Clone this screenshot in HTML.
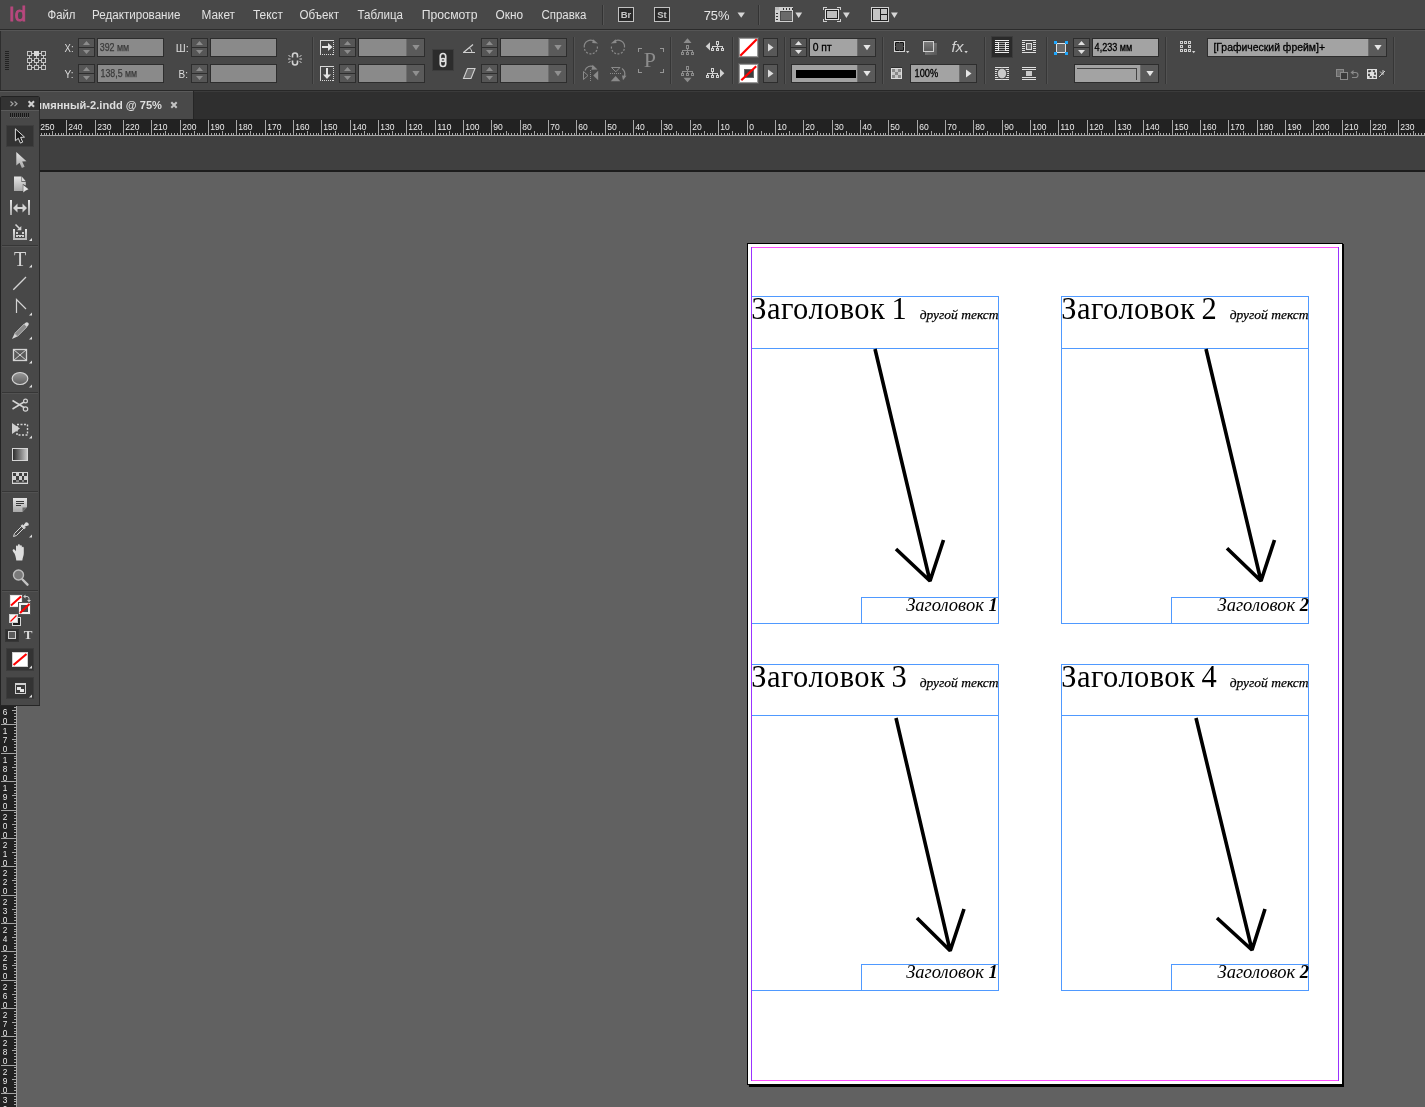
<!DOCTYPE html>
<html lang="ru"><head><meta charset="utf-8"><title>InDesign</title>
<style>
html,body{margin:0;padding:0;background:#616161;overflow:hidden}
body{width:1425px;height:1107px;position:relative}
svg{position:absolute;left:0;top:0;display:block;will-change:transform}
.ui{font-family:"Liberation Sans","DejaVu Sans",sans-serif}
.uib{font-family:"Liberation Sans","DejaVu Sans",sans-serif;font-weight:bold}
.se{font-family:"Liberation Serif","DejaVu Serif",serif}
.sei{font-family:"Liberation Serif","DejaVu Serif",serif;font-style:italic}
.seb{font-family:"Liberation Serif","DejaVu Serif",serif;font-style:italic;font-weight:bold}
.cr{shape-rendering:crispEdges}
</style></head><body>
<svg width="1425" height="1107" viewBox="0 0 1425 1107">
<g class="cr">
<rect x="0" y="0" width="1425" height="1107" fill="#616161" />
<rect x="0" y="0" width="1425" height="30" fill="#484848" />
<rect x="0" y="30" width="1425" height="61" fill="#474747" />
<rect x="0" y="29" width="1425" height="1" fill="#2b2b2b" />
<rect x="0" y="30" width="1425" height="1" fill="#555" />
<rect x="0" y="31" width="1" height="59" fill="#2e2e2e" />
<rect x="0" y="91" width="1425" height="28" fill="#2f2f2f" />
<rect x="0" y="91" width="1425" height="1" fill="#3b3b3b" />
<rect x="0" y="91" width="193" height="28" fill="#494949" />
<rect x="0" y="91" width="193" height="1" fill="#5a5a5a" />
<rect x="193" y="91" width="1" height="28" fill="#262626" />
<rect x="0" y="90" width="1425" height="1" fill="#282828" />
<rect x="0" y="119" width="1425" height="17" fill="#222222" />
<rect x="0" y="136" width="1425" height="34" fill="#404040" />
<rect x="0" y="170" width="1425" height="2" fill="#1c1c1c" />
</g>
<g class="cr">
<rect x="39" y="135" width="1386" height="1" fill="#a8a8a8" />
<rect x="41" y="133" width="1" height="3" fill="#a8a8a8" />
<rect x="44" y="133" width="1" height="3" fill="#a8a8a8" />
<rect x="46" y="133" width="1" height="3" fill="#a8a8a8" />
<rect x="49" y="133" width="1" height="3" fill="#a8a8a8" />
<rect x="52" y="131" width="1" height="5" fill="#a8a8a8" />
<rect x="55" y="133" width="1" height="3" fill="#a8a8a8" />
<rect x="58" y="133" width="1" height="3" fill="#a8a8a8" />
<rect x="61" y="133" width="1" height="3" fill="#a8a8a8" />
<rect x="63" y="133" width="1" height="3" fill="#a8a8a8" />
<rect x="66" y="120" width="1" height="16" fill="#a8a8a8" />
<rect x="69" y="133" width="1" height="3" fill="#a8a8a8" />
<rect x="72" y="133" width="1" height="3" fill="#a8a8a8" />
<rect x="75" y="133" width="1" height="3" fill="#a8a8a8" />
<rect x="78" y="133" width="1" height="3" fill="#a8a8a8" />
<rect x="80" y="131" width="1" height="5" fill="#a8a8a8" />
<rect x="83" y="133" width="1" height="3" fill="#a8a8a8" />
<rect x="86" y="133" width="1" height="3" fill="#a8a8a8" />
<rect x="89" y="133" width="1" height="3" fill="#a8a8a8" />
<rect x="92" y="133" width="1" height="3" fill="#a8a8a8" />
<rect x="95" y="120" width="1" height="16" fill="#a8a8a8" />
<rect x="97" y="133" width="1" height="3" fill="#a8a8a8" />
<rect x="100" y="133" width="1" height="3" fill="#a8a8a8" />
<rect x="103" y="133" width="1" height="3" fill="#a8a8a8" />
<rect x="106" y="133" width="1" height="3" fill="#a8a8a8" />
<rect x="109" y="131" width="1" height="5" fill="#a8a8a8" />
<rect x="112" y="133" width="1" height="3" fill="#a8a8a8" />
<rect x="114" y="133" width="1" height="3" fill="#a8a8a8" />
<rect x="117" y="133" width="1" height="3" fill="#a8a8a8" />
<rect x="120" y="133" width="1" height="3" fill="#a8a8a8" />
<rect x="123" y="120" width="1" height="16" fill="#a8a8a8" />
<rect x="126" y="133" width="1" height="3" fill="#a8a8a8" />
<rect x="129" y="133" width="1" height="3" fill="#a8a8a8" />
<rect x="131" y="133" width="1" height="3" fill="#a8a8a8" />
<rect x="134" y="133" width="1" height="3" fill="#a8a8a8" />
<rect x="137" y="131" width="1" height="5" fill="#a8a8a8" />
<rect x="140" y="133" width="1" height="3" fill="#a8a8a8" />
<rect x="143" y="133" width="1" height="3" fill="#a8a8a8" />
<rect x="146" y="133" width="1" height="3" fill="#a8a8a8" />
<rect x="148" y="133" width="1" height="3" fill="#a8a8a8" />
<rect x="151" y="120" width="1" height="16" fill="#a8a8a8" />
<rect x="154" y="133" width="1" height="3" fill="#a8a8a8" />
<rect x="157" y="133" width="1" height="3" fill="#a8a8a8" />
<rect x="160" y="133" width="1" height="3" fill="#a8a8a8" />
<rect x="163" y="133" width="1" height="3" fill="#a8a8a8" />
<rect x="165" y="131" width="1" height="5" fill="#a8a8a8" />
<rect x="168" y="133" width="1" height="3" fill="#a8a8a8" />
<rect x="171" y="133" width="1" height="3" fill="#a8a8a8" />
<rect x="174" y="133" width="1" height="3" fill="#a8a8a8" />
<rect x="177" y="133" width="1" height="3" fill="#a8a8a8" />
<rect x="180" y="120" width="1" height="16" fill="#a8a8a8" />
<rect x="182" y="133" width="1" height="3" fill="#a8a8a8" />
<rect x="185" y="133" width="1" height="3" fill="#a8a8a8" />
<rect x="188" y="133" width="1" height="3" fill="#a8a8a8" />
<rect x="191" y="133" width="1" height="3" fill="#a8a8a8" />
<rect x="194" y="131" width="1" height="5" fill="#a8a8a8" />
<rect x="197" y="133" width="1" height="3" fill="#a8a8a8" />
<rect x="199" y="133" width="1" height="3" fill="#a8a8a8" />
<rect x="202" y="133" width="1" height="3" fill="#a8a8a8" />
<rect x="205" y="133" width="1" height="3" fill="#a8a8a8" />
<rect x="208" y="120" width="1" height="16" fill="#a8a8a8" />
<rect x="211" y="133" width="1" height="3" fill="#a8a8a8" />
<rect x="214" y="133" width="1" height="3" fill="#a8a8a8" />
<rect x="216" y="133" width="1" height="3" fill="#a8a8a8" />
<rect x="219" y="133" width="1" height="3" fill="#a8a8a8" />
<rect x="222" y="131" width="1" height="5" fill="#a8a8a8" />
<rect x="225" y="133" width="1" height="3" fill="#a8a8a8" />
<rect x="228" y="133" width="1" height="3" fill="#a8a8a8" />
<rect x="231" y="133" width="1" height="3" fill="#a8a8a8" />
<rect x="233" y="133" width="1" height="3" fill="#a8a8a8" />
<rect x="236" y="120" width="1" height="16" fill="#a8a8a8" />
<rect x="239" y="133" width="1" height="3" fill="#a8a8a8" />
<rect x="242" y="133" width="1" height="3" fill="#a8a8a8" />
<rect x="245" y="133" width="1" height="3" fill="#a8a8a8" />
<rect x="248" y="133" width="1" height="3" fill="#a8a8a8" />
<rect x="250" y="131" width="1" height="5" fill="#a8a8a8" />
<rect x="253" y="133" width="1" height="3" fill="#a8a8a8" />
<rect x="256" y="133" width="1" height="3" fill="#a8a8a8" />
<rect x="259" y="133" width="1" height="3" fill="#a8a8a8" />
<rect x="262" y="133" width="1" height="3" fill="#a8a8a8" />
<rect x="265" y="120" width="1" height="16" fill="#a8a8a8" />
<rect x="267" y="133" width="1" height="3" fill="#a8a8a8" />
<rect x="270" y="133" width="1" height="3" fill="#a8a8a8" />
<rect x="273" y="133" width="1" height="3" fill="#a8a8a8" />
<rect x="276" y="133" width="1" height="3" fill="#a8a8a8" />
<rect x="279" y="131" width="1" height="5" fill="#a8a8a8" />
<rect x="282" y="133" width="1" height="3" fill="#a8a8a8" />
<rect x="284" y="133" width="1" height="3" fill="#a8a8a8" />
<rect x="287" y="133" width="1" height="3" fill="#a8a8a8" />
<rect x="290" y="133" width="1" height="3" fill="#a8a8a8" />
<rect x="293" y="120" width="1" height="16" fill="#a8a8a8" />
<rect x="296" y="133" width="1" height="3" fill="#a8a8a8" />
<rect x="299" y="133" width="1" height="3" fill="#a8a8a8" />
<rect x="301" y="133" width="1" height="3" fill="#a8a8a8" />
<rect x="304" y="133" width="1" height="3" fill="#a8a8a8" />
<rect x="307" y="131" width="1" height="5" fill="#a8a8a8" />
<rect x="310" y="133" width="1" height="3" fill="#a8a8a8" />
<rect x="313" y="133" width="1" height="3" fill="#a8a8a8" />
<rect x="316" y="133" width="1" height="3" fill="#a8a8a8" />
<rect x="318" y="133" width="1" height="3" fill="#a8a8a8" />
<rect x="321" y="120" width="1" height="16" fill="#a8a8a8" />
<rect x="324" y="133" width="1" height="3" fill="#a8a8a8" />
<rect x="327" y="133" width="1" height="3" fill="#a8a8a8" />
<rect x="330" y="133" width="1" height="3" fill="#a8a8a8" />
<rect x="333" y="133" width="1" height="3" fill="#a8a8a8" />
<rect x="335" y="131" width="1" height="5" fill="#a8a8a8" />
<rect x="338" y="133" width="1" height="3" fill="#a8a8a8" />
<rect x="341" y="133" width="1" height="3" fill="#a8a8a8" />
<rect x="344" y="133" width="1" height="3" fill="#a8a8a8" />
<rect x="347" y="133" width="1" height="3" fill="#a8a8a8" />
<rect x="350" y="120" width="1" height="16" fill="#a8a8a8" />
<rect x="352" y="133" width="1" height="3" fill="#a8a8a8" />
<rect x="355" y="133" width="1" height="3" fill="#a8a8a8" />
<rect x="358" y="133" width="1" height="3" fill="#a8a8a8" />
<rect x="361" y="133" width="1" height="3" fill="#a8a8a8" />
<rect x="364" y="131" width="1" height="5" fill="#a8a8a8" />
<rect x="367" y="133" width="1" height="3" fill="#a8a8a8" />
<rect x="369" y="133" width="1" height="3" fill="#a8a8a8" />
<rect x="372" y="133" width="1" height="3" fill="#a8a8a8" />
<rect x="375" y="133" width="1" height="3" fill="#a8a8a8" />
<rect x="378" y="120" width="1" height="16" fill="#a8a8a8" />
<rect x="381" y="133" width="1" height="3" fill="#a8a8a8" />
<rect x="384" y="133" width="1" height="3" fill="#a8a8a8" />
<rect x="387" y="133" width="1" height="3" fill="#a8a8a8" />
<rect x="389" y="133" width="1" height="3" fill="#a8a8a8" />
<rect x="392" y="131" width="1" height="5" fill="#a8a8a8" />
<rect x="395" y="133" width="1" height="3" fill="#a8a8a8" />
<rect x="398" y="133" width="1" height="3" fill="#a8a8a8" />
<rect x="401" y="133" width="1" height="3" fill="#a8a8a8" />
<rect x="404" y="133" width="1" height="3" fill="#a8a8a8" />
<rect x="406" y="120" width="1" height="16" fill="#a8a8a8" />
<rect x="409" y="133" width="1" height="3" fill="#a8a8a8" />
<rect x="412" y="133" width="1" height="3" fill="#a8a8a8" />
<rect x="415" y="133" width="1" height="3" fill="#a8a8a8" />
<rect x="418" y="133" width="1" height="3" fill="#a8a8a8" />
<rect x="421" y="131" width="1" height="5" fill="#a8a8a8" />
<rect x="423" y="133" width="1" height="3" fill="#a8a8a8" />
<rect x="426" y="133" width="1" height="3" fill="#a8a8a8" />
<rect x="429" y="133" width="1" height="3" fill="#a8a8a8" />
<rect x="432" y="133" width="1" height="3" fill="#a8a8a8" />
<rect x="435" y="120" width="1" height="16" fill="#a8a8a8" />
<rect x="438" y="133" width="1" height="3" fill="#a8a8a8" />
<rect x="440" y="133" width="1" height="3" fill="#a8a8a8" />
<rect x="443" y="133" width="1" height="3" fill="#a8a8a8" />
<rect x="446" y="133" width="1" height="3" fill="#a8a8a8" />
<rect x="449" y="131" width="1" height="5" fill="#a8a8a8" />
<rect x="452" y="133" width="1" height="3" fill="#a8a8a8" />
<rect x="455" y="133" width="1" height="3" fill="#a8a8a8" />
<rect x="457" y="133" width="1" height="3" fill="#a8a8a8" />
<rect x="460" y="133" width="1" height="3" fill="#a8a8a8" />
<rect x="463" y="120" width="1" height="16" fill="#a8a8a8" />
<rect x="466" y="133" width="1" height="3" fill="#a8a8a8" />
<rect x="469" y="133" width="1" height="3" fill="#a8a8a8" />
<rect x="472" y="133" width="1" height="3" fill="#a8a8a8" />
<rect x="474" y="133" width="1" height="3" fill="#a8a8a8" />
<rect x="477" y="131" width="1" height="5" fill="#a8a8a8" />
<rect x="480" y="133" width="1" height="3" fill="#a8a8a8" />
<rect x="483" y="133" width="1" height="3" fill="#a8a8a8" />
<rect x="486" y="133" width="1" height="3" fill="#a8a8a8" />
<rect x="489" y="133" width="1" height="3" fill="#a8a8a8" />
<rect x="491" y="120" width="1" height="16" fill="#a8a8a8" />
<rect x="494" y="133" width="1" height="3" fill="#a8a8a8" />
<rect x="497" y="133" width="1" height="3" fill="#a8a8a8" />
<rect x="500" y="133" width="1" height="3" fill="#a8a8a8" />
<rect x="503" y="133" width="1" height="3" fill="#a8a8a8" />
<rect x="506" y="131" width="1" height="5" fill="#a8a8a8" />
<rect x="508" y="133" width="1" height="3" fill="#a8a8a8" />
<rect x="511" y="133" width="1" height="3" fill="#a8a8a8" />
<rect x="514" y="133" width="1" height="3" fill="#a8a8a8" />
<rect x="517" y="133" width="1" height="3" fill="#a8a8a8" />
<rect x="520" y="120" width="1" height="16" fill="#a8a8a8" />
<rect x="523" y="133" width="1" height="3" fill="#a8a8a8" />
<rect x="525" y="133" width="1" height="3" fill="#a8a8a8" />
<rect x="528" y="133" width="1" height="3" fill="#a8a8a8" />
<rect x="531" y="133" width="1" height="3" fill="#a8a8a8" />
<rect x="534" y="131" width="1" height="5" fill="#a8a8a8" />
<rect x="537" y="133" width="1" height="3" fill="#a8a8a8" />
<rect x="540" y="133" width="1" height="3" fill="#a8a8a8" />
<rect x="542" y="133" width="1" height="3" fill="#a8a8a8" />
<rect x="545" y="133" width="1" height="3" fill="#a8a8a8" />
<rect x="548" y="120" width="1" height="16" fill="#a8a8a8" />
<rect x="551" y="133" width="1" height="3" fill="#a8a8a8" />
<rect x="554" y="133" width="1" height="3" fill="#a8a8a8" />
<rect x="557" y="133" width="1" height="3" fill="#a8a8a8" />
<rect x="559" y="133" width="1" height="3" fill="#a8a8a8" />
<rect x="562" y="131" width="1" height="5" fill="#a8a8a8" />
<rect x="565" y="133" width="1" height="3" fill="#a8a8a8" />
<rect x="568" y="133" width="1" height="3" fill="#a8a8a8" />
<rect x="571" y="133" width="1" height="3" fill="#a8a8a8" />
<rect x="574" y="133" width="1" height="3" fill="#a8a8a8" />
<rect x="576" y="120" width="1" height="16" fill="#a8a8a8" />
<rect x="579" y="133" width="1" height="3" fill="#a8a8a8" />
<rect x="582" y="133" width="1" height="3" fill="#a8a8a8" />
<rect x="585" y="133" width="1" height="3" fill="#a8a8a8" />
<rect x="588" y="133" width="1" height="3" fill="#a8a8a8" />
<rect x="591" y="131" width="1" height="5" fill="#a8a8a8" />
<rect x="593" y="133" width="1" height="3" fill="#a8a8a8" />
<rect x="596" y="133" width="1" height="3" fill="#a8a8a8" />
<rect x="599" y="133" width="1" height="3" fill="#a8a8a8" />
<rect x="602" y="133" width="1" height="3" fill="#a8a8a8" />
<rect x="605" y="120" width="1" height="16" fill="#a8a8a8" />
<rect x="608" y="133" width="1" height="3" fill="#a8a8a8" />
<rect x="610" y="133" width="1" height="3" fill="#a8a8a8" />
<rect x="613" y="133" width="1" height="3" fill="#a8a8a8" />
<rect x="616" y="133" width="1" height="3" fill="#a8a8a8" />
<rect x="619" y="131" width="1" height="5" fill="#a8a8a8" />
<rect x="622" y="133" width="1" height="3" fill="#a8a8a8" />
<rect x="625" y="133" width="1" height="3" fill="#a8a8a8" />
<rect x="627" y="133" width="1" height="3" fill="#a8a8a8" />
<rect x="630" y="133" width="1" height="3" fill="#a8a8a8" />
<rect x="633" y="120" width="1" height="16" fill="#a8a8a8" />
<rect x="636" y="133" width="1" height="3" fill="#a8a8a8" />
<rect x="639" y="133" width="1" height="3" fill="#a8a8a8" />
<rect x="642" y="133" width="1" height="3" fill="#a8a8a8" />
<rect x="644" y="133" width="1" height="3" fill="#a8a8a8" />
<rect x="647" y="131" width="1" height="5" fill="#a8a8a8" />
<rect x="650" y="133" width="1" height="3" fill="#a8a8a8" />
<rect x="653" y="133" width="1" height="3" fill="#a8a8a8" />
<rect x="656" y="133" width="1" height="3" fill="#a8a8a8" />
<rect x="659" y="133" width="1" height="3" fill="#a8a8a8" />
<rect x="661" y="120" width="1" height="16" fill="#a8a8a8" />
<rect x="664" y="133" width="1" height="3" fill="#a8a8a8" />
<rect x="667" y="133" width="1" height="3" fill="#a8a8a8" />
<rect x="670" y="133" width="1" height="3" fill="#a8a8a8" />
<rect x="673" y="133" width="1" height="3" fill="#a8a8a8" />
<rect x="676" y="131" width="1" height="5" fill="#a8a8a8" />
<rect x="678" y="133" width="1" height="3" fill="#a8a8a8" />
<rect x="681" y="133" width="1" height="3" fill="#a8a8a8" />
<rect x="684" y="133" width="1" height="3" fill="#a8a8a8" />
<rect x="687" y="133" width="1" height="3" fill="#a8a8a8" />
<rect x="690" y="120" width="1" height="16" fill="#a8a8a8" />
<rect x="693" y="133" width="1" height="3" fill="#a8a8a8" />
<rect x="695" y="133" width="1" height="3" fill="#a8a8a8" />
<rect x="698" y="133" width="1" height="3" fill="#a8a8a8" />
<rect x="701" y="133" width="1" height="3" fill="#a8a8a8" />
<rect x="704" y="131" width="1" height="5" fill="#a8a8a8" />
<rect x="707" y="133" width="1" height="3" fill="#a8a8a8" />
<rect x="710" y="133" width="1" height="3" fill="#a8a8a8" />
<rect x="712" y="133" width="1" height="3" fill="#a8a8a8" />
<rect x="715" y="133" width="1" height="3" fill="#a8a8a8" />
<rect x="718" y="120" width="1" height="16" fill="#a8a8a8" />
<rect x="721" y="133" width="1" height="3" fill="#a8a8a8" />
<rect x="724" y="133" width="1" height="3" fill="#a8a8a8" />
<rect x="727" y="133" width="1" height="3" fill="#a8a8a8" />
<rect x="729" y="133" width="1" height="3" fill="#a8a8a8" />
<rect x="732" y="131" width="1" height="5" fill="#a8a8a8" />
<rect x="735" y="133" width="1" height="3" fill="#a8a8a8" />
<rect x="738" y="133" width="1" height="3" fill="#a8a8a8" />
<rect x="741" y="133" width="1" height="3" fill="#a8a8a8" />
<rect x="744" y="133" width="1" height="3" fill="#a8a8a8" />
<rect x="747" y="120" width="1" height="16" fill="#a8a8a8" />
<rect x="749" y="133" width="1" height="3" fill="#a8a8a8" />
<rect x="752" y="133" width="1" height="3" fill="#a8a8a8" />
<rect x="755" y="133" width="1" height="3" fill="#a8a8a8" />
<rect x="758" y="133" width="1" height="3" fill="#a8a8a8" />
<rect x="761" y="131" width="1" height="5" fill="#a8a8a8" />
<rect x="764" y="133" width="1" height="3" fill="#a8a8a8" />
<rect x="766" y="133" width="1" height="3" fill="#a8a8a8" />
<rect x="769" y="133" width="1" height="3" fill="#a8a8a8" />
<rect x="772" y="133" width="1" height="3" fill="#a8a8a8" />
<rect x="775" y="120" width="1" height="16" fill="#a8a8a8" />
<rect x="778" y="133" width="1" height="3" fill="#a8a8a8" />
<rect x="781" y="133" width="1" height="3" fill="#a8a8a8" />
<rect x="783" y="133" width="1" height="3" fill="#a8a8a8" />
<rect x="786" y="133" width="1" height="3" fill="#a8a8a8" />
<rect x="789" y="131" width="1" height="5" fill="#a8a8a8" />
<rect x="792" y="133" width="1" height="3" fill="#a8a8a8" />
<rect x="795" y="133" width="1" height="3" fill="#a8a8a8" />
<rect x="798" y="133" width="1" height="3" fill="#a8a8a8" />
<rect x="800" y="133" width="1" height="3" fill="#a8a8a8" />
<rect x="803" y="120" width="1" height="16" fill="#a8a8a8" />
<rect x="806" y="133" width="1" height="3" fill="#a8a8a8" />
<rect x="809" y="133" width="1" height="3" fill="#a8a8a8" />
<rect x="812" y="133" width="1" height="3" fill="#a8a8a8" />
<rect x="815" y="133" width="1" height="3" fill="#a8a8a8" />
<rect x="817" y="131" width="1" height="5" fill="#a8a8a8" />
<rect x="820" y="133" width="1" height="3" fill="#a8a8a8" />
<rect x="823" y="133" width="1" height="3" fill="#a8a8a8" />
<rect x="826" y="133" width="1" height="3" fill="#a8a8a8" />
<rect x="829" y="133" width="1" height="3" fill="#a8a8a8" />
<rect x="832" y="120" width="1" height="16" fill="#a8a8a8" />
<rect x="834" y="133" width="1" height="3" fill="#a8a8a8" />
<rect x="837" y="133" width="1" height="3" fill="#a8a8a8" />
<rect x="840" y="133" width="1" height="3" fill="#a8a8a8" />
<rect x="843" y="133" width="1" height="3" fill="#a8a8a8" />
<rect x="846" y="131" width="1" height="5" fill="#a8a8a8" />
<rect x="849" y="133" width="1" height="3" fill="#a8a8a8" />
<rect x="851" y="133" width="1" height="3" fill="#a8a8a8" />
<rect x="854" y="133" width="1" height="3" fill="#a8a8a8" />
<rect x="857" y="133" width="1" height="3" fill="#a8a8a8" />
<rect x="860" y="120" width="1" height="16" fill="#a8a8a8" />
<rect x="863" y="133" width="1" height="3" fill="#a8a8a8" />
<rect x="866" y="133" width="1" height="3" fill="#a8a8a8" />
<rect x="868" y="133" width="1" height="3" fill="#a8a8a8" />
<rect x="871" y="133" width="1" height="3" fill="#a8a8a8" />
<rect x="874" y="131" width="1" height="5" fill="#a8a8a8" />
<rect x="877" y="133" width="1" height="3" fill="#a8a8a8" />
<rect x="880" y="133" width="1" height="3" fill="#a8a8a8" />
<rect x="883" y="133" width="1" height="3" fill="#a8a8a8" />
<rect x="885" y="133" width="1" height="3" fill="#a8a8a8" />
<rect x="888" y="120" width="1" height="16" fill="#a8a8a8" />
<rect x="891" y="133" width="1" height="3" fill="#a8a8a8" />
<rect x="894" y="133" width="1" height="3" fill="#a8a8a8" />
<rect x="897" y="133" width="1" height="3" fill="#a8a8a8" />
<rect x="900" y="133" width="1" height="3" fill="#a8a8a8" />
<rect x="902" y="131" width="1" height="5" fill="#a8a8a8" />
<rect x="905" y="133" width="1" height="3" fill="#a8a8a8" />
<rect x="908" y="133" width="1" height="3" fill="#a8a8a8" />
<rect x="911" y="133" width="1" height="3" fill="#a8a8a8" />
<rect x="914" y="133" width="1" height="3" fill="#a8a8a8" />
<rect x="917" y="120" width="1" height="16" fill="#a8a8a8" />
<rect x="919" y="133" width="1" height="3" fill="#a8a8a8" />
<rect x="922" y="133" width="1" height="3" fill="#a8a8a8" />
<rect x="925" y="133" width="1" height="3" fill="#a8a8a8" />
<rect x="928" y="133" width="1" height="3" fill="#a8a8a8" />
<rect x="931" y="131" width="1" height="5" fill="#a8a8a8" />
<rect x="934" y="133" width="1" height="3" fill="#a8a8a8" />
<rect x="936" y="133" width="1" height="3" fill="#a8a8a8" />
<rect x="939" y="133" width="1" height="3" fill="#a8a8a8" />
<rect x="942" y="133" width="1" height="3" fill="#a8a8a8" />
<rect x="945" y="120" width="1" height="16" fill="#a8a8a8" />
<rect x="948" y="133" width="1" height="3" fill="#a8a8a8" />
<rect x="951" y="133" width="1" height="3" fill="#a8a8a8" />
<rect x="953" y="133" width="1" height="3" fill="#a8a8a8" />
<rect x="956" y="133" width="1" height="3" fill="#a8a8a8" />
<rect x="959" y="131" width="1" height="5" fill="#a8a8a8" />
<rect x="962" y="133" width="1" height="3" fill="#a8a8a8" />
<rect x="965" y="133" width="1" height="3" fill="#a8a8a8" />
<rect x="968" y="133" width="1" height="3" fill="#a8a8a8" />
<rect x="970" y="133" width="1" height="3" fill="#a8a8a8" />
<rect x="973" y="120" width="1" height="16" fill="#a8a8a8" />
<rect x="976" y="133" width="1" height="3" fill="#a8a8a8" />
<rect x="979" y="133" width="1" height="3" fill="#a8a8a8" />
<rect x="982" y="133" width="1" height="3" fill="#a8a8a8" />
<rect x="985" y="133" width="1" height="3" fill="#a8a8a8" />
<rect x="987" y="131" width="1" height="5" fill="#a8a8a8" />
<rect x="990" y="133" width="1" height="3" fill="#a8a8a8" />
<rect x="993" y="133" width="1" height="3" fill="#a8a8a8" />
<rect x="996" y="133" width="1" height="3" fill="#a8a8a8" />
<rect x="999" y="133" width="1" height="3" fill="#a8a8a8" />
<rect x="1002" y="120" width="1" height="16" fill="#a8a8a8" />
<rect x="1004" y="133" width="1" height="3" fill="#a8a8a8" />
<rect x="1007" y="133" width="1" height="3" fill="#a8a8a8" />
<rect x="1010" y="133" width="1" height="3" fill="#a8a8a8" />
<rect x="1013" y="133" width="1" height="3" fill="#a8a8a8" />
<rect x="1016" y="131" width="1" height="5" fill="#a8a8a8" />
<rect x="1019" y="133" width="1" height="3" fill="#a8a8a8" />
<rect x="1021" y="133" width="1" height="3" fill="#a8a8a8" />
<rect x="1024" y="133" width="1" height="3" fill="#a8a8a8" />
<rect x="1027" y="133" width="1" height="3" fill="#a8a8a8" />
<rect x="1030" y="120" width="1" height="16" fill="#a8a8a8" />
<rect x="1033" y="133" width="1" height="3" fill="#a8a8a8" />
<rect x="1036" y="133" width="1" height="3" fill="#a8a8a8" />
<rect x="1038" y="133" width="1" height="3" fill="#a8a8a8" />
<rect x="1041" y="133" width="1" height="3" fill="#a8a8a8" />
<rect x="1044" y="131" width="1" height="5" fill="#a8a8a8" />
<rect x="1047" y="133" width="1" height="3" fill="#a8a8a8" />
<rect x="1050" y="133" width="1" height="3" fill="#a8a8a8" />
<rect x="1053" y="133" width="1" height="3" fill="#a8a8a8" />
<rect x="1055" y="133" width="1" height="3" fill="#a8a8a8" />
<rect x="1058" y="120" width="1" height="16" fill="#a8a8a8" />
<rect x="1061" y="133" width="1" height="3" fill="#a8a8a8" />
<rect x="1064" y="133" width="1" height="3" fill="#a8a8a8" />
<rect x="1067" y="133" width="1" height="3" fill="#a8a8a8" />
<rect x="1070" y="133" width="1" height="3" fill="#a8a8a8" />
<rect x="1072" y="131" width="1" height="5" fill="#a8a8a8" />
<rect x="1075" y="133" width="1" height="3" fill="#a8a8a8" />
<rect x="1078" y="133" width="1" height="3" fill="#a8a8a8" />
<rect x="1081" y="133" width="1" height="3" fill="#a8a8a8" />
<rect x="1084" y="133" width="1" height="3" fill="#a8a8a8" />
<rect x="1087" y="120" width="1" height="16" fill="#a8a8a8" />
<rect x="1089" y="133" width="1" height="3" fill="#a8a8a8" />
<rect x="1092" y="133" width="1" height="3" fill="#a8a8a8" />
<rect x="1095" y="133" width="1" height="3" fill="#a8a8a8" />
<rect x="1098" y="133" width="1" height="3" fill="#a8a8a8" />
<rect x="1101" y="131" width="1" height="5" fill="#a8a8a8" />
<rect x="1104" y="133" width="1" height="3" fill="#a8a8a8" />
<rect x="1106" y="133" width="1" height="3" fill="#a8a8a8" />
<rect x="1109" y="133" width="1" height="3" fill="#a8a8a8" />
<rect x="1112" y="133" width="1" height="3" fill="#a8a8a8" />
<rect x="1115" y="120" width="1" height="16" fill="#a8a8a8" />
<rect x="1118" y="133" width="1" height="3" fill="#a8a8a8" />
<rect x="1121" y="133" width="1" height="3" fill="#a8a8a8" />
<rect x="1124" y="133" width="1" height="3" fill="#a8a8a8" />
<rect x="1126" y="133" width="1" height="3" fill="#a8a8a8" />
<rect x="1129" y="131" width="1" height="5" fill="#a8a8a8" />
<rect x="1132" y="133" width="1" height="3" fill="#a8a8a8" />
<rect x="1135" y="133" width="1" height="3" fill="#a8a8a8" />
<rect x="1138" y="133" width="1" height="3" fill="#a8a8a8" />
<rect x="1141" y="133" width="1" height="3" fill="#a8a8a8" />
<rect x="1143" y="120" width="1" height="16" fill="#a8a8a8" />
<rect x="1146" y="133" width="1" height="3" fill="#a8a8a8" />
<rect x="1149" y="133" width="1" height="3" fill="#a8a8a8" />
<rect x="1152" y="133" width="1" height="3" fill="#a8a8a8" />
<rect x="1155" y="133" width="1" height="3" fill="#a8a8a8" />
<rect x="1158" y="131" width="1" height="5" fill="#a8a8a8" />
<rect x="1160" y="133" width="1" height="3" fill="#a8a8a8" />
<rect x="1163" y="133" width="1" height="3" fill="#a8a8a8" />
<rect x="1166" y="133" width="1" height="3" fill="#a8a8a8" />
<rect x="1169" y="133" width="1" height="3" fill="#a8a8a8" />
<rect x="1172" y="120" width="1" height="16" fill="#a8a8a8" />
<rect x="1175" y="133" width="1" height="3" fill="#a8a8a8" />
<rect x="1177" y="133" width="1" height="3" fill="#a8a8a8" />
<rect x="1180" y="133" width="1" height="3" fill="#a8a8a8" />
<rect x="1183" y="133" width="1" height="3" fill="#a8a8a8" />
<rect x="1186" y="131" width="1" height="5" fill="#a8a8a8" />
<rect x="1189" y="133" width="1" height="3" fill="#a8a8a8" />
<rect x="1192" y="133" width="1" height="3" fill="#a8a8a8" />
<rect x="1194" y="133" width="1" height="3" fill="#a8a8a8" />
<rect x="1197" y="133" width="1" height="3" fill="#a8a8a8" />
<rect x="1200" y="120" width="1" height="16" fill="#a8a8a8" />
<rect x="1203" y="133" width="1" height="3" fill="#a8a8a8" />
<rect x="1206" y="133" width="1" height="3" fill="#a8a8a8" />
<rect x="1209" y="133" width="1" height="3" fill="#a8a8a8" />
<rect x="1211" y="133" width="1" height="3" fill="#a8a8a8" />
<rect x="1214" y="131" width="1" height="5" fill="#a8a8a8" />
<rect x="1217" y="133" width="1" height="3" fill="#a8a8a8" />
<rect x="1220" y="133" width="1" height="3" fill="#a8a8a8" />
<rect x="1223" y="133" width="1" height="3" fill="#a8a8a8" />
<rect x="1226" y="133" width="1" height="3" fill="#a8a8a8" />
<rect x="1228" y="120" width="1" height="16" fill="#a8a8a8" />
<rect x="1231" y="133" width="1" height="3" fill="#a8a8a8" />
<rect x="1234" y="133" width="1" height="3" fill="#a8a8a8" />
<rect x="1237" y="133" width="1" height="3" fill="#a8a8a8" />
<rect x="1240" y="133" width="1" height="3" fill="#a8a8a8" />
<rect x="1243" y="131" width="1" height="5" fill="#a8a8a8" />
<rect x="1245" y="133" width="1" height="3" fill="#a8a8a8" />
<rect x="1248" y="133" width="1" height="3" fill="#a8a8a8" />
<rect x="1251" y="133" width="1" height="3" fill="#a8a8a8" />
<rect x="1254" y="133" width="1" height="3" fill="#a8a8a8" />
<rect x="1257" y="120" width="1" height="16" fill="#a8a8a8" />
<rect x="1260" y="133" width="1" height="3" fill="#a8a8a8" />
<rect x="1262" y="133" width="1" height="3" fill="#a8a8a8" />
<rect x="1265" y="133" width="1" height="3" fill="#a8a8a8" />
<rect x="1268" y="133" width="1" height="3" fill="#a8a8a8" />
<rect x="1271" y="131" width="1" height="5" fill="#a8a8a8" />
<rect x="1274" y="133" width="1" height="3" fill="#a8a8a8" />
<rect x="1277" y="133" width="1" height="3" fill="#a8a8a8" />
<rect x="1279" y="133" width="1" height="3" fill="#a8a8a8" />
<rect x="1282" y="133" width="1" height="3" fill="#a8a8a8" />
<rect x="1285" y="120" width="1" height="16" fill="#a8a8a8" />
<rect x="1288" y="133" width="1" height="3" fill="#a8a8a8" />
<rect x="1291" y="133" width="1" height="3" fill="#a8a8a8" />
<rect x="1294" y="133" width="1" height="3" fill="#a8a8a8" />
<rect x="1296" y="133" width="1" height="3" fill="#a8a8a8" />
<rect x="1299" y="131" width="1" height="5" fill="#a8a8a8" />
<rect x="1302" y="133" width="1" height="3" fill="#a8a8a8" />
<rect x="1305" y="133" width="1" height="3" fill="#a8a8a8" />
<rect x="1308" y="133" width="1" height="3" fill="#a8a8a8" />
<rect x="1311" y="133" width="1" height="3" fill="#a8a8a8" />
<rect x="1313" y="120" width="1" height="16" fill="#a8a8a8" />
<rect x="1316" y="133" width="1" height="3" fill="#a8a8a8" />
<rect x="1319" y="133" width="1" height="3" fill="#a8a8a8" />
<rect x="1322" y="133" width="1" height="3" fill="#a8a8a8" />
<rect x="1325" y="133" width="1" height="3" fill="#a8a8a8" />
<rect x="1328" y="131" width="1" height="5" fill="#a8a8a8" />
<rect x="1330" y="133" width="1" height="3" fill="#a8a8a8" />
<rect x="1333" y="133" width="1" height="3" fill="#a8a8a8" />
<rect x="1336" y="133" width="1" height="3" fill="#a8a8a8" />
<rect x="1339" y="133" width="1" height="3" fill="#a8a8a8" />
<rect x="1342" y="120" width="1" height="16" fill="#a8a8a8" />
<rect x="1345" y="133" width="1" height="3" fill="#a8a8a8" />
<rect x="1347" y="133" width="1" height="3" fill="#a8a8a8" />
<rect x="1350" y="133" width="1" height="3" fill="#a8a8a8" />
<rect x="1353" y="133" width="1" height="3" fill="#a8a8a8" />
<rect x="1356" y="131" width="1" height="5" fill="#a8a8a8" />
<rect x="1359" y="133" width="1" height="3" fill="#a8a8a8" />
<rect x="1362" y="133" width="1" height="3" fill="#a8a8a8" />
<rect x="1364" y="133" width="1" height="3" fill="#a8a8a8" />
<rect x="1367" y="133" width="1" height="3" fill="#a8a8a8" />
<rect x="1370" y="120" width="1" height="16" fill="#a8a8a8" />
<rect x="1373" y="133" width="1" height="3" fill="#a8a8a8" />
<rect x="1376" y="133" width="1" height="3" fill="#a8a8a8" />
<rect x="1379" y="133" width="1" height="3" fill="#a8a8a8" />
<rect x="1381" y="133" width="1" height="3" fill="#a8a8a8" />
<rect x="1384" y="131" width="1" height="5" fill="#a8a8a8" />
<rect x="1387" y="133" width="1" height="3" fill="#a8a8a8" />
<rect x="1390" y="133" width="1" height="3" fill="#a8a8a8" />
<rect x="1393" y="133" width="1" height="3" fill="#a8a8a8" />
<rect x="1396" y="133" width="1" height="3" fill="#a8a8a8" />
<rect x="1398" y="120" width="1" height="16" fill="#a8a8a8" />
<rect x="1401" y="133" width="1" height="3" fill="#a8a8a8" />
<rect x="1404" y="133" width="1" height="3" fill="#a8a8a8" />
<rect x="1407" y="133" width="1" height="3" fill="#a8a8a8" />
<rect x="1410" y="133" width="1" height="3" fill="#a8a8a8" />
<rect x="1413" y="131" width="1" height="5" fill="#a8a8a8" />
<rect x="1415" y="133" width="1" height="3" fill="#a8a8a8" />
<rect x="1418" y="133" width="1" height="3" fill="#a8a8a8" />
<rect x="1421" y="133" width="1" height="3" fill="#a8a8a8" />
<rect x="1424" y="133" width="1" height="3" fill="#a8a8a8" />
</g>
<text x="40.3" y="129.8" font-size="9.8" fill="#ececec" class="ui" textLength="14.25" lengthAdjust="spacingAndGlyphs">250</text>
<text x="68.3" y="129.8" font-size="9.8" fill="#ececec" class="ui" textLength="14.25" lengthAdjust="spacingAndGlyphs">240</text>
<text x="97.3" y="129.8" font-size="9.8" fill="#ececec" class="ui" textLength="14.25" lengthAdjust="spacingAndGlyphs">230</text>
<text x="125.3" y="129.8" font-size="9.8" fill="#ececec" class="ui" textLength="14.25" lengthAdjust="spacingAndGlyphs">220</text>
<text x="153.3" y="129.8" font-size="9.8" fill="#ececec" class="ui" textLength="14.25" lengthAdjust="spacingAndGlyphs">210</text>
<text x="182.3" y="129.8" font-size="9.8" fill="#ececec" class="ui" textLength="14.25" lengthAdjust="spacingAndGlyphs">200</text>
<text x="210.3" y="129.8" font-size="9.8" fill="#ececec" class="ui" textLength="14.25" lengthAdjust="spacingAndGlyphs">190</text>
<text x="238.3" y="129.8" font-size="9.8" fill="#ececec" class="ui" textLength="14.25" lengthAdjust="spacingAndGlyphs">180</text>
<text x="267.3" y="129.8" font-size="9.8" fill="#ececec" class="ui" textLength="14.25" lengthAdjust="spacingAndGlyphs">170</text>
<text x="295.3" y="129.8" font-size="9.8" fill="#ececec" class="ui" textLength="14.25" lengthAdjust="spacingAndGlyphs">160</text>
<text x="323.3" y="129.8" font-size="9.8" fill="#ececec" class="ui" textLength="14.25" lengthAdjust="spacingAndGlyphs">150</text>
<text x="352.3" y="129.8" font-size="9.8" fill="#ececec" class="ui" textLength="14.25" lengthAdjust="spacingAndGlyphs">140</text>
<text x="380.3" y="129.8" font-size="9.8" fill="#ececec" class="ui" textLength="14.25" lengthAdjust="spacingAndGlyphs">130</text>
<text x="408.3" y="129.8" font-size="9.8" fill="#ececec" class="ui" textLength="14.25" lengthAdjust="spacingAndGlyphs">120</text>
<text x="437.3" y="129.8" font-size="9.8" fill="#ececec" class="ui" textLength="14.25" lengthAdjust="spacingAndGlyphs">110</text>
<text x="465.3" y="129.8" font-size="9.8" fill="#ececec" class="ui" textLength="14.25" lengthAdjust="spacingAndGlyphs">100</text>
<text x="493.3" y="129.8" font-size="9.8" fill="#ececec" class="ui" textLength="9.5" lengthAdjust="spacingAndGlyphs">90</text>
<text x="522.3" y="129.8" font-size="9.8" fill="#ececec" class="ui" textLength="9.5" lengthAdjust="spacingAndGlyphs">80</text>
<text x="550.3" y="129.8" font-size="9.8" fill="#ececec" class="ui" textLength="9.5" lengthAdjust="spacingAndGlyphs">70</text>
<text x="578.3" y="129.8" font-size="9.8" fill="#ececec" class="ui" textLength="9.5" lengthAdjust="spacingAndGlyphs">60</text>
<text x="607.3" y="129.8" font-size="9.8" fill="#ececec" class="ui" textLength="9.5" lengthAdjust="spacingAndGlyphs">50</text>
<text x="635.3" y="129.8" font-size="9.8" fill="#ececec" class="ui" textLength="9.5" lengthAdjust="spacingAndGlyphs">40</text>
<text x="663.3" y="129.8" font-size="9.8" fill="#ececec" class="ui" textLength="9.5" lengthAdjust="spacingAndGlyphs">30</text>
<text x="692.3" y="129.8" font-size="9.8" fill="#ececec" class="ui" textLength="9.5" lengthAdjust="spacingAndGlyphs">20</text>
<text x="720.3" y="129.8" font-size="9.8" fill="#ececec" class="ui" textLength="9.5" lengthAdjust="spacingAndGlyphs">10</text>
<text x="749.3" y="129.8" font-size="9.8" fill="#ececec" class="ui" textLength="4.75" lengthAdjust="spacingAndGlyphs">0</text>
<text x="777.3" y="129.8" font-size="9.8" fill="#ececec" class="ui" textLength="9.5" lengthAdjust="spacingAndGlyphs">10</text>
<text x="805.3" y="129.8" font-size="9.8" fill="#ececec" class="ui" textLength="9.5" lengthAdjust="spacingAndGlyphs">20</text>
<text x="834.3" y="129.8" font-size="9.8" fill="#ececec" class="ui" textLength="9.5" lengthAdjust="spacingAndGlyphs">30</text>
<text x="862.3" y="129.8" font-size="9.8" fill="#ececec" class="ui" textLength="9.5" lengthAdjust="spacingAndGlyphs">40</text>
<text x="890.3" y="129.8" font-size="9.8" fill="#ececec" class="ui" textLength="9.5" lengthAdjust="spacingAndGlyphs">50</text>
<text x="919.3" y="129.8" font-size="9.8" fill="#ececec" class="ui" textLength="9.5" lengthAdjust="spacingAndGlyphs">60</text>
<text x="947.3" y="129.8" font-size="9.8" fill="#ececec" class="ui" textLength="9.5" lengthAdjust="spacingAndGlyphs">70</text>
<text x="975.3" y="129.8" font-size="9.8" fill="#ececec" class="ui" textLength="9.5" lengthAdjust="spacingAndGlyphs">80</text>
<text x="1004.3" y="129.8" font-size="9.8" fill="#ececec" class="ui" textLength="9.5" lengthAdjust="spacingAndGlyphs">90</text>
<text x="1032.3" y="129.8" font-size="9.8" fill="#ececec" class="ui" textLength="14.25" lengthAdjust="spacingAndGlyphs">100</text>
<text x="1060.3" y="129.8" font-size="9.8" fill="#ececec" class="ui" textLength="14.25" lengthAdjust="spacingAndGlyphs">110</text>
<text x="1089.3" y="129.8" font-size="9.8" fill="#ececec" class="ui" textLength="14.25" lengthAdjust="spacingAndGlyphs">120</text>
<text x="1117.3" y="129.8" font-size="9.8" fill="#ececec" class="ui" textLength="14.25" lengthAdjust="spacingAndGlyphs">130</text>
<text x="1145.3" y="129.8" font-size="9.8" fill="#ececec" class="ui" textLength="14.25" lengthAdjust="spacingAndGlyphs">140</text>
<text x="1174.3" y="129.8" font-size="9.8" fill="#ececec" class="ui" textLength="14.25" lengthAdjust="spacingAndGlyphs">150</text>
<text x="1202.3" y="129.8" font-size="9.8" fill="#ececec" class="ui" textLength="14.25" lengthAdjust="spacingAndGlyphs">160</text>
<text x="1230.3" y="129.8" font-size="9.8" fill="#ececec" class="ui" textLength="14.25" lengthAdjust="spacingAndGlyphs">170</text>
<text x="1259.3" y="129.8" font-size="9.8" fill="#ececec" class="ui" textLength="14.25" lengthAdjust="spacingAndGlyphs">180</text>
<text x="1287.3" y="129.8" font-size="9.8" fill="#ececec" class="ui" textLength="14.25" lengthAdjust="spacingAndGlyphs">190</text>
<text x="1315.3" y="129.8" font-size="9.8" fill="#ececec" class="ui" textLength="14.25" lengthAdjust="spacingAndGlyphs">200</text>
<text x="1344.3" y="129.8" font-size="9.8" fill="#ececec" class="ui" textLength="14.25" lengthAdjust="spacingAndGlyphs">210</text>
<text x="1372.3" y="129.8" font-size="9.8" fill="#ececec" class="ui" textLength="14.25" lengthAdjust="spacingAndGlyphs">220</text>
<text x="1400.3" y="129.8" font-size="9.8" fill="#ececec" class="ui" textLength="14.25" lengthAdjust="spacingAndGlyphs">230</text>
<g class="cr">
<rect x="0" y="172" width="17" height="935" fill="#222222" />
<rect x="16" y="172" width="1" height="935" fill="#a8a8a8" />
<rect x="1" y="668" width="16" height="1" fill="#a8a8a8" />
<rect x="14" y="671" width="3" height="1" fill="#a8a8a8" />
<rect x="14" y="673" width="3" height="1" fill="#a8a8a8" />
<rect x="14" y="676" width="3" height="1" fill="#a8a8a8" />
<rect x="14" y="679" width="3" height="1" fill="#a8a8a8" />
<rect x="12" y="682" width="5" height="1" fill="#a8a8a8" />
<rect x="14" y="685" width="3" height="1" fill="#a8a8a8" />
<rect x="14" y="688" width="3" height="1" fill="#a8a8a8" />
<rect x="14" y="690" width="3" height="1" fill="#a8a8a8" />
<rect x="14" y="693" width="3" height="1" fill="#a8a8a8" />
<rect x="1" y="696" width="16" height="1" fill="#a8a8a8" />
<rect x="14" y="699" width="3" height="1" fill="#a8a8a8" />
<rect x="14" y="702" width="3" height="1" fill="#a8a8a8" />
<rect x="14" y="705" width="3" height="1" fill="#a8a8a8" />
<rect x="14" y="707" width="3" height="1" fill="#a8a8a8" />
<rect x="12" y="710" width="5" height="1" fill="#a8a8a8" />
<rect x="14" y="713" width="3" height="1" fill="#a8a8a8" />
<rect x="14" y="716" width="3" height="1" fill="#a8a8a8" />
<rect x="14" y="719" width="3" height="1" fill="#a8a8a8" />
<rect x="14" y="722" width="3" height="1" fill="#a8a8a8" />
<rect x="1" y="724" width="16" height="1" fill="#a8a8a8" />
<rect x="14" y="727" width="3" height="1" fill="#a8a8a8" />
<rect x="14" y="730" width="3" height="1" fill="#a8a8a8" />
<rect x="14" y="733" width="3" height="1" fill="#a8a8a8" />
<rect x="14" y="736" width="3" height="1" fill="#a8a8a8" />
<rect x="12" y="739" width="5" height="1" fill="#a8a8a8" />
<rect x="14" y="741" width="3" height="1" fill="#a8a8a8" />
<rect x="14" y="744" width="3" height="1" fill="#a8a8a8" />
<rect x="14" y="747" width="3" height="1" fill="#a8a8a8" />
<rect x="14" y="750" width="3" height="1" fill="#a8a8a8" />
<rect x="1" y="753" width="16" height="1" fill="#a8a8a8" />
<rect x="14" y="756" width="3" height="1" fill="#a8a8a8" />
<rect x="14" y="758" width="3" height="1" fill="#a8a8a8" />
<rect x="14" y="761" width="3" height="1" fill="#a8a8a8" />
<rect x="14" y="764" width="3" height="1" fill="#a8a8a8" />
<rect x="12" y="767" width="5" height="1" fill="#a8a8a8" />
<rect x="14" y="770" width="3" height="1" fill="#a8a8a8" />
<rect x="14" y="773" width="3" height="1" fill="#a8a8a8" />
<rect x="14" y="776" width="3" height="1" fill="#a8a8a8" />
<rect x="14" y="778" width="3" height="1" fill="#a8a8a8" />
<rect x="1" y="781" width="16" height="1" fill="#a8a8a8" />
<rect x="14" y="784" width="3" height="1" fill="#a8a8a8" />
<rect x="14" y="787" width="3" height="1" fill="#a8a8a8" />
<rect x="14" y="790" width="3" height="1" fill="#a8a8a8" />
<rect x="14" y="793" width="3" height="1" fill="#a8a8a8" />
<rect x="12" y="795" width="5" height="1" fill="#a8a8a8" />
<rect x="14" y="798" width="3" height="1" fill="#a8a8a8" />
<rect x="14" y="801" width="3" height="1" fill="#a8a8a8" />
<rect x="14" y="804" width="3" height="1" fill="#a8a8a8" />
<rect x="14" y="807" width="3" height="1" fill="#a8a8a8" />
<rect x="1" y="810" width="16" height="1" fill="#a8a8a8" />
<rect x="14" y="812" width="3" height="1" fill="#a8a8a8" />
<rect x="14" y="815" width="3" height="1" fill="#a8a8a8" />
<rect x="14" y="818" width="3" height="1" fill="#a8a8a8" />
<rect x="14" y="821" width="3" height="1" fill="#a8a8a8" />
<rect x="12" y="824" width="5" height="1" fill="#a8a8a8" />
<rect x="14" y="827" width="3" height="1" fill="#a8a8a8" />
<rect x="14" y="829" width="3" height="1" fill="#a8a8a8" />
<rect x="14" y="832" width="3" height="1" fill="#a8a8a8" />
<rect x="14" y="835" width="3" height="1" fill="#a8a8a8" />
<rect x="1" y="838" width="16" height="1" fill="#a8a8a8" />
<rect x="14" y="841" width="3" height="1" fill="#a8a8a8" />
<rect x="14" y="844" width="3" height="1" fill="#a8a8a8" />
<rect x="14" y="846" width="3" height="1" fill="#a8a8a8" />
<rect x="14" y="849" width="3" height="1" fill="#a8a8a8" />
<rect x="12" y="852" width="5" height="1" fill="#a8a8a8" />
<rect x="14" y="855" width="3" height="1" fill="#a8a8a8" />
<rect x="14" y="858" width="3" height="1" fill="#a8a8a8" />
<rect x="14" y="861" width="3" height="1" fill="#a8a8a8" />
<rect x="14" y="863" width="3" height="1" fill="#a8a8a8" />
<rect x="1" y="866" width="16" height="1" fill="#a8a8a8" />
<rect x="14" y="869" width="3" height="1" fill="#a8a8a8" />
<rect x="14" y="872" width="3" height="1" fill="#a8a8a8" />
<rect x="14" y="875" width="3" height="1" fill="#a8a8a8" />
<rect x="14" y="878" width="3" height="1" fill="#a8a8a8" />
<rect x="12" y="880" width="5" height="1" fill="#a8a8a8" />
<rect x="14" y="883" width="3" height="1" fill="#a8a8a8" />
<rect x="14" y="886" width="3" height="1" fill="#a8a8a8" />
<rect x="14" y="889" width="3" height="1" fill="#a8a8a8" />
<rect x="14" y="892" width="3" height="1" fill="#a8a8a8" />
<rect x="1" y="895" width="16" height="1" fill="#a8a8a8" />
<rect x="14" y="897" width="3" height="1" fill="#a8a8a8" />
<rect x="14" y="900" width="3" height="1" fill="#a8a8a8" />
<rect x="14" y="903" width="3" height="1" fill="#a8a8a8" />
<rect x="14" y="906" width="3" height="1" fill="#a8a8a8" />
<rect x="12" y="909" width="5" height="1" fill="#a8a8a8" />
<rect x="14" y="912" width="3" height="1" fill="#a8a8a8" />
<rect x="14" y="914" width="3" height="1" fill="#a8a8a8" />
<rect x="14" y="917" width="3" height="1" fill="#a8a8a8" />
<rect x="14" y="920" width="3" height="1" fill="#a8a8a8" />
<rect x="1" y="923" width="16" height="1" fill="#a8a8a8" />
<rect x="14" y="926" width="3" height="1" fill="#a8a8a8" />
<rect x="14" y="929" width="3" height="1" fill="#a8a8a8" />
<rect x="14" y="931" width="3" height="1" fill="#a8a8a8" />
<rect x="14" y="934" width="3" height="1" fill="#a8a8a8" />
<rect x="12" y="937" width="5" height="1" fill="#a8a8a8" />
<rect x="14" y="940" width="3" height="1" fill="#a8a8a8" />
<rect x="14" y="943" width="3" height="1" fill="#a8a8a8" />
<rect x="14" y="946" width="3" height="1" fill="#a8a8a8" />
<rect x="14" y="948" width="3" height="1" fill="#a8a8a8" />
<rect x="1" y="951" width="16" height="1" fill="#a8a8a8" />
<rect x="14" y="954" width="3" height="1" fill="#a8a8a8" />
<rect x="14" y="957" width="3" height="1" fill="#a8a8a8" />
<rect x="14" y="960" width="3" height="1" fill="#a8a8a8" />
<rect x="14" y="963" width="3" height="1" fill="#a8a8a8" />
<rect x="12" y="965" width="5" height="1" fill="#a8a8a8" />
<rect x="14" y="968" width="3" height="1" fill="#a8a8a8" />
<rect x="14" y="971" width="3" height="1" fill="#a8a8a8" />
<rect x="14" y="974" width="3" height="1" fill="#a8a8a8" />
<rect x="14" y="977" width="3" height="1" fill="#a8a8a8" />
<rect x="1" y="980" width="16" height="1" fill="#a8a8a8" />
<rect x="14" y="982" width="3" height="1" fill="#a8a8a8" />
<rect x="14" y="985" width="3" height="1" fill="#a8a8a8" />
<rect x="14" y="988" width="3" height="1" fill="#a8a8a8" />
<rect x="14" y="991" width="3" height="1" fill="#a8a8a8" />
<rect x="12" y="994" width="5" height="1" fill="#a8a8a8" />
<rect x="14" y="997" width="3" height="1" fill="#a8a8a8" />
<rect x="14" y="999" width="3" height="1" fill="#a8a8a8" />
<rect x="14" y="1002" width="3" height="1" fill="#a8a8a8" />
<rect x="14" y="1005" width="3" height="1" fill="#a8a8a8" />
<rect x="1" y="1008" width="16" height="1" fill="#a8a8a8" />
<rect x="14" y="1011" width="3" height="1" fill="#a8a8a8" />
<rect x="14" y="1014" width="3" height="1" fill="#a8a8a8" />
<rect x="14" y="1016" width="3" height="1" fill="#a8a8a8" />
<rect x="14" y="1019" width="3" height="1" fill="#a8a8a8" />
<rect x="12" y="1022" width="5" height="1" fill="#a8a8a8" />
<rect x="14" y="1025" width="3" height="1" fill="#a8a8a8" />
<rect x="14" y="1028" width="3" height="1" fill="#a8a8a8" />
<rect x="14" y="1031" width="3" height="1" fill="#a8a8a8" />
<rect x="14" y="1033" width="3" height="1" fill="#a8a8a8" />
<rect x="1" y="1036" width="16" height="1" fill="#a8a8a8" />
<rect x="14" y="1039" width="3" height="1" fill="#a8a8a8" />
<rect x="14" y="1042" width="3" height="1" fill="#a8a8a8" />
<rect x="14" y="1045" width="3" height="1" fill="#a8a8a8" />
<rect x="14" y="1048" width="3" height="1" fill="#a8a8a8" />
<rect x="12" y="1050" width="5" height="1" fill="#a8a8a8" />
<rect x="14" y="1053" width="3" height="1" fill="#a8a8a8" />
<rect x="14" y="1056" width="3" height="1" fill="#a8a8a8" />
<rect x="14" y="1059" width="3" height="1" fill="#a8a8a8" />
<rect x="14" y="1062" width="3" height="1" fill="#a8a8a8" />
<rect x="1" y="1065" width="16" height="1" fill="#a8a8a8" />
<rect x="14" y="1067" width="3" height="1" fill="#a8a8a8" />
<rect x="14" y="1070" width="3" height="1" fill="#a8a8a8" />
<rect x="14" y="1073" width="3" height="1" fill="#a8a8a8" />
<rect x="14" y="1076" width="3" height="1" fill="#a8a8a8" />
<rect x="12" y="1079" width="5" height="1" fill="#a8a8a8" />
<rect x="14" y="1082" width="3" height="1" fill="#a8a8a8" />
<rect x="14" y="1084" width="3" height="1" fill="#a8a8a8" />
<rect x="14" y="1087" width="3" height="1" fill="#a8a8a8" />
<rect x="14" y="1090" width="3" height="1" fill="#a8a8a8" />
<rect x="1" y="1093" width="16" height="1" fill="#a8a8a8" />
<rect x="14" y="1096" width="3" height="1" fill="#a8a8a8" />
<rect x="14" y="1099" width="3" height="1" fill="#a8a8a8" />
<rect x="14" y="1101" width="3" height="1" fill="#a8a8a8" />
<rect x="14" y="1104" width="3" height="1" fill="#a8a8a8" />
</g>
<text x="2.8" y="677.6" font-size="9.8" fill="#ececec" class="ui" textLength="4.6" lengthAdjust="spacingAndGlyphs">1</text>
<text x="2.8" y="686.7" font-size="9.8" fill="#ececec" class="ui" textLength="4.6" lengthAdjust="spacingAndGlyphs">5</text>
<text x="2.8" y="695.8000000000001" font-size="9.8" fill="#ececec" class="ui" textLength="4.6" lengthAdjust="spacingAndGlyphs">0</text>
<text x="2.8" y="705.6" font-size="9.8" fill="#ececec" class="ui" textLength="4.6" lengthAdjust="spacingAndGlyphs">1</text>
<text x="2.8" y="714.7" font-size="9.8" fill="#ececec" class="ui" textLength="4.6" lengthAdjust="spacingAndGlyphs">6</text>
<text x="2.8" y="723.8000000000001" font-size="9.8" fill="#ececec" class="ui" textLength="4.6" lengthAdjust="spacingAndGlyphs">0</text>
<text x="2.8" y="733.6" font-size="9.8" fill="#ececec" class="ui" textLength="4.6" lengthAdjust="spacingAndGlyphs">1</text>
<text x="2.8" y="742.7" font-size="9.8" fill="#ececec" class="ui" textLength="4.6" lengthAdjust="spacingAndGlyphs">7</text>
<text x="2.8" y="751.8000000000001" font-size="9.8" fill="#ececec" class="ui" textLength="4.6" lengthAdjust="spacingAndGlyphs">0</text>
<text x="2.8" y="762.6" font-size="9.8" fill="#ececec" class="ui" textLength="4.6" lengthAdjust="spacingAndGlyphs">1</text>
<text x="2.8" y="771.7" font-size="9.8" fill="#ececec" class="ui" textLength="4.6" lengthAdjust="spacingAndGlyphs">8</text>
<text x="2.8" y="780.8000000000001" font-size="9.8" fill="#ececec" class="ui" textLength="4.6" lengthAdjust="spacingAndGlyphs">0</text>
<text x="2.8" y="790.6" font-size="9.8" fill="#ececec" class="ui" textLength="4.6" lengthAdjust="spacingAndGlyphs">1</text>
<text x="2.8" y="799.7" font-size="9.8" fill="#ececec" class="ui" textLength="4.6" lengthAdjust="spacingAndGlyphs">9</text>
<text x="2.8" y="808.8000000000001" font-size="9.8" fill="#ececec" class="ui" textLength="4.6" lengthAdjust="spacingAndGlyphs">0</text>
<text x="2.8" y="819.6" font-size="9.8" fill="#ececec" class="ui" textLength="4.6" lengthAdjust="spacingAndGlyphs">2</text>
<text x="2.8" y="828.7" font-size="9.8" fill="#ececec" class="ui" textLength="4.6" lengthAdjust="spacingAndGlyphs">0</text>
<text x="2.8" y="837.8000000000001" font-size="9.8" fill="#ececec" class="ui" textLength="4.6" lengthAdjust="spacingAndGlyphs">0</text>
<text x="2.8" y="847.6" font-size="9.8" fill="#ececec" class="ui" textLength="4.6" lengthAdjust="spacingAndGlyphs">2</text>
<text x="2.8" y="856.7" font-size="9.8" fill="#ececec" class="ui" textLength="4.6" lengthAdjust="spacingAndGlyphs">1</text>
<text x="2.8" y="865.8000000000001" font-size="9.8" fill="#ececec" class="ui" textLength="4.6" lengthAdjust="spacingAndGlyphs">0</text>
<text x="2.8" y="875.6" font-size="9.8" fill="#ececec" class="ui" textLength="4.6" lengthAdjust="spacingAndGlyphs">2</text>
<text x="2.8" y="884.7" font-size="9.8" fill="#ececec" class="ui" textLength="4.6" lengthAdjust="spacingAndGlyphs">2</text>
<text x="2.8" y="893.8000000000001" font-size="9.8" fill="#ececec" class="ui" textLength="4.6" lengthAdjust="spacingAndGlyphs">0</text>
<text x="2.8" y="904.6" font-size="9.8" fill="#ececec" class="ui" textLength="4.6" lengthAdjust="spacingAndGlyphs">2</text>
<text x="2.8" y="913.7" font-size="9.8" fill="#ececec" class="ui" textLength="4.6" lengthAdjust="spacingAndGlyphs">3</text>
<text x="2.8" y="922.8000000000001" font-size="9.8" fill="#ececec" class="ui" textLength="4.6" lengthAdjust="spacingAndGlyphs">0</text>
<text x="2.8" y="932.6" font-size="9.8" fill="#ececec" class="ui" textLength="4.6" lengthAdjust="spacingAndGlyphs">2</text>
<text x="2.8" y="941.7" font-size="9.8" fill="#ececec" class="ui" textLength="4.6" lengthAdjust="spacingAndGlyphs">4</text>
<text x="2.8" y="950.8000000000001" font-size="9.8" fill="#ececec" class="ui" textLength="4.6" lengthAdjust="spacingAndGlyphs">0</text>
<text x="2.8" y="960.6" font-size="9.8" fill="#ececec" class="ui" textLength="4.6" lengthAdjust="spacingAndGlyphs">2</text>
<text x="2.8" y="969.7" font-size="9.8" fill="#ececec" class="ui" textLength="4.6" lengthAdjust="spacingAndGlyphs">5</text>
<text x="2.8" y="978.8000000000001" font-size="9.8" fill="#ececec" class="ui" textLength="4.6" lengthAdjust="spacingAndGlyphs">0</text>
<text x="2.8" y="989.6" font-size="9.8" fill="#ececec" class="ui" textLength="4.6" lengthAdjust="spacingAndGlyphs">2</text>
<text x="2.8" y="998.7" font-size="9.8" fill="#ececec" class="ui" textLength="4.6" lengthAdjust="spacingAndGlyphs">6</text>
<text x="2.8" y="1007.8000000000001" font-size="9.8" fill="#ececec" class="ui" textLength="4.6" lengthAdjust="spacingAndGlyphs">0</text>
<text x="2.8" y="1017.6" font-size="9.8" fill="#ececec" class="ui" textLength="4.6" lengthAdjust="spacingAndGlyphs">2</text>
<text x="2.8" y="1026.7" font-size="9.8" fill="#ececec" class="ui" textLength="4.6" lengthAdjust="spacingAndGlyphs">7</text>
<text x="2.8" y="1035.8" font-size="9.8" fill="#ececec" class="ui" textLength="4.6" lengthAdjust="spacingAndGlyphs">0</text>
<text x="2.8" y="1045.6" font-size="9.8" fill="#ececec" class="ui" textLength="4.6" lengthAdjust="spacingAndGlyphs">2</text>
<text x="2.8" y="1054.6999999999998" font-size="9.8" fill="#ececec" class="ui" textLength="4.6" lengthAdjust="spacingAndGlyphs">8</text>
<text x="2.8" y="1063.8" font-size="9.8" fill="#ececec" class="ui" textLength="4.6" lengthAdjust="spacingAndGlyphs">0</text>
<text x="2.8" y="1074.6" font-size="9.8" fill="#ececec" class="ui" textLength="4.6" lengthAdjust="spacingAndGlyphs">2</text>
<text x="2.8" y="1083.6999999999998" font-size="9.8" fill="#ececec" class="ui" textLength="4.6" lengthAdjust="spacingAndGlyphs">9</text>
<text x="2.8" y="1092.8" font-size="9.8" fill="#ececec" class="ui" textLength="4.6" lengthAdjust="spacingAndGlyphs">0</text>
<text x="2.8" y="1102.6" font-size="9.8" fill="#ececec" class="ui" textLength="4.6" lengthAdjust="spacingAndGlyphs">3</text>
<text x="2.8" y="1111.6999999999998" font-size="9.8" fill="#ececec" class="ui" textLength="4.6" lengthAdjust="spacingAndGlyphs">0</text>
<text x="2.8" y="1120.8" font-size="9.8" fill="#ececec" class="ui" textLength="4.6" lengthAdjust="spacingAndGlyphs">0</text>
<g class="cr">
<rect x="747" y="243" width="597" height="844" fill="#000" />
<rect x="747" y="243" width="1" height="841" fill="#000" />
<rect x="748" y="244" width="594" height="840" fill="#fff" />
<rect x="1343" y="243" width="1" height="1" fill="#616161" />
<rect x="747" y="1085" width="2" height="2" fill="#616161" />
<rect x="751" y="296" width="248" height="1" fill="#4f99ff" />
<rect x="751" y="348" width="248" height="1" fill="#4f99ff" />
<rect x="751" y="296" width="1" height="53" fill="#4f99ff" />
<rect x="998" y="296" width="1" height="53" fill="#4f99ff" />
<rect x="751" y="348" width="248" height="1" fill="#4f99ff" />
<rect x="751" y="623" width="248" height="1" fill="#4f99ff" />
<rect x="751" y="348" width="1" height="276" fill="#4f99ff" />
<rect x="998" y="348" width="1" height="276" fill="#4f99ff" />
<rect x="861" y="597" width="138" height="1" fill="#4f99ff" />
<rect x="861" y="623" width="138" height="1" fill="#4f99ff" />
<rect x="861" y="597" width="1" height="27" fill="#4f99ff" />
<rect x="998" y="597" width="1" height="27" fill="#4f99ff" />
<rect x="1061" y="296" width="248" height="1" fill="#4f99ff" />
<rect x="1061" y="348" width="248" height="1" fill="#4f99ff" />
<rect x="1061" y="296" width="1" height="53" fill="#4f99ff" />
<rect x="1308" y="296" width="1" height="53" fill="#4f99ff" />
<rect x="1061" y="348" width="248" height="1" fill="#4f99ff" />
<rect x="1061" y="623" width="248" height="1" fill="#4f99ff" />
<rect x="1061" y="348" width="1" height="276" fill="#4f99ff" />
<rect x="1308" y="348" width="1" height="276" fill="#4f99ff" />
<rect x="1171" y="597" width="138" height="1" fill="#4f99ff" />
<rect x="1171" y="623" width="138" height="1" fill="#4f99ff" />
<rect x="1171" y="597" width="1" height="27" fill="#4f99ff" />
<rect x="1308" y="597" width="1" height="27" fill="#4f99ff" />
<rect x="751" y="664" width="248" height="1" fill="#4f99ff" />
<rect x="751" y="715" width="248" height="1" fill="#4f99ff" />
<rect x="751" y="664" width="1" height="52" fill="#4f99ff" />
<rect x="998" y="664" width="1" height="52" fill="#4f99ff" />
<rect x="751" y="715" width="248" height="1" fill="#4f99ff" />
<rect x="751" y="990" width="248" height="1" fill="#4f99ff" />
<rect x="751" y="715" width="1" height="276" fill="#4f99ff" />
<rect x="998" y="715" width="1" height="276" fill="#4f99ff" />
<rect x="861" y="964" width="138" height="1" fill="#4f99ff" />
<rect x="861" y="990" width="138" height="1" fill="#4f99ff" />
<rect x="861" y="964" width="1" height="27" fill="#4f99ff" />
<rect x="998" y="964" width="1" height="27" fill="#4f99ff" />
<rect x="1061" y="664" width="248" height="1" fill="#4f99ff" />
<rect x="1061" y="715" width="248" height="1" fill="#4f99ff" />
<rect x="1061" y="664" width="1" height="52" fill="#4f99ff" />
<rect x="1308" y="664" width="1" height="52" fill="#4f99ff" />
<rect x="1061" y="715" width="248" height="1" fill="#4f99ff" />
<rect x="1061" y="990" width="248" height="1" fill="#4f99ff" />
<rect x="1061" y="715" width="1" height="276" fill="#4f99ff" />
<rect x="1308" y="715" width="1" height="276" fill="#4f99ff" />
<rect x="1171" y="964" width="138" height="1" fill="#4f99ff" />
<rect x="1171" y="990" width="138" height="1" fill="#4f99ff" />
<rect x="1171" y="964" width="1" height="27" fill="#4f99ff" />
<rect x="1308" y="964" width="1" height="27" fill="#4f99ff" />
<rect x="751" y="247" width="588" height="1" fill="#ff4dff" />
<rect x="751" y="1080" width="588" height="1" fill="#ff4dff" />
<rect x="751" y="247" width="1" height="834" fill="#9933ff" />
<rect x="1338" y="247" width="1" height="834" fill="#9933ff" />
</g>
<path d="M875 349 L930 581 M896 549 L930 581 L943.5 540" fill="none" stroke="#000" stroke-width="3.6" stroke-linejoin="bevel"/>
<path d="M1206 349 L1261 581 M1227 548.3 L1261 581 L1274.5 540" fill="none" stroke="#000" stroke-width="3.6" stroke-linejoin="bevel"/>
<path d="M896 718 L950.2 950.8 M917 918 L950.2 950.8 L964 909" fill="none" stroke="#000" stroke-width="3.6" stroke-linejoin="bevel"/>
<path d="M1196 718 L1252 950 M1217 918 L1252 950 L1265 909" fill="none" stroke="#000" stroke-width="3.6" stroke-linejoin="bevel"/>
<text x="751.3" y="319" font-size="30.5" fill="#000" class="se"><tspan letter-spacing="0.42">Заголовок</tspan><tspan dx="-1.6" letter-spacing="0.2"> 1</tspan></text>
<text x="998.5" y="319" font-size="13.5" fill="#000" class="sei" text-anchor="end" stroke="#000" stroke-width="0.25">другой текст</text>
<text x="997.7" y="610.8" font-size="18.5" fill="#000" class="sei" text-anchor="end">Заголовок <tspan class="seb">1</tspan></text>
<text x="1061.3" y="319" font-size="30.5" fill="#000" class="se"><tspan letter-spacing="0.42">Заголовок</tspan><tspan dx="-1.6" letter-spacing="0.2"> 2</tspan></text>
<text x="1308.5" y="319" font-size="13.5" fill="#000" class="sei" text-anchor="end" stroke="#000" stroke-width="0.25">другой текст</text>
<text x="1309" y="610.8" font-size="18.5" fill="#000" class="sei" text-anchor="end">Заголовок <tspan class="seb">2</tspan></text>
<text x="751.3" y="687" font-size="30.5" fill="#000" class="se"><tspan letter-spacing="0.42">Заголовок</tspan><tspan dx="-1.6" letter-spacing="0.2"> 3</tspan></text>
<text x="998.5" y="687" font-size="13.5" fill="#000" class="sei" text-anchor="end" stroke="#000" stroke-width="0.25">другой текст</text>
<text x="997.7" y="977.8" font-size="18.5" fill="#000" class="sei" text-anchor="end">Заголовок <tspan class="seb">1</tspan></text>
<text x="1061.3" y="687" font-size="30.5" fill="#000" class="se"><tspan letter-spacing="0.42">Заголовок</tspan><tspan dx="-1.6" letter-spacing="0.2"> 4</tspan></text>
<text x="1308.5" y="687" font-size="13.5" fill="#000" class="sei" text-anchor="end" stroke="#000" stroke-width="0.25">другой текст</text>
<text x="1309" y="977.8" font-size="18.5" fill="#000" class="sei" text-anchor="end">Заголовок <tspan class="seb">2</tspan></text>
<g id="menubar">
<text x="9" y="20.8" font-size="20.5" fill="#b8487e" class="ui" textLength="17" lengthAdjust="spacingAndGlyphs" stroke="#b8487e" stroke-width="0.9">Id</text>
<text x="47.5" y="19" font-size="12.3" fill="#e2e2e2" class="ui" textLength="28" lengthAdjust="spacingAndGlyphs" >Файл</text>
<text x="92" y="19" font-size="12.3" fill="#e2e2e2" class="ui" textLength="88.5" lengthAdjust="spacingAndGlyphs" >Редактирование</text>
<text x="201.5" y="19" font-size="12.3" fill="#e2e2e2" class="ui" textLength="33.5" lengthAdjust="spacingAndGlyphs" >Макет</text>
<text x="253" y="19" font-size="12.3" fill="#e2e2e2" class="ui" textLength="30" lengthAdjust="spacingAndGlyphs" >Текст</text>
<text x="299.5" y="19" font-size="12.3" fill="#e2e2e2" class="ui" textLength="39.5" lengthAdjust="spacingAndGlyphs" >Объект</text>
<text x="357.5" y="19" font-size="12.3" fill="#e2e2e2" class="ui" textLength="45.5" lengthAdjust="spacingAndGlyphs" >Таблица</text>
<text x="421.7" y="19" font-size="12.3" fill="#e2e2e2" class="ui" textLength="55.8" lengthAdjust="spacingAndGlyphs" >Просмотр</text>
<text x="495.5" y="19" font-size="12.3" fill="#e2e2e2" class="ui" textLength="27.5" lengthAdjust="spacingAndGlyphs" >Окно</text>
<text x="541.5" y="19" font-size="12.3" fill="#e2e2e2" class="ui" textLength="45" lengthAdjust="spacingAndGlyphs" >Справка</text>
<g class="cr">
<rect x="602" y="5" width="1" height="20" fill="#333" />
<rect x="603" y="5" width="1" height="20" fill="#555" />
<rect x="758" y="5" width="1" height="20" fill="#333" />
<rect x="759" y="5" width="1" height="20" fill="#555" />
<rect x="618" y="7" width="16" height="15" fill="#c2c2c2" />
<rect x="619" y="8" width="14" height="13" fill="#2a2a2a" />
<rect x="654" y="7" width="16" height="15" fill="#c2c2c2" />
<rect x="655" y="8" width="14" height="13" fill="#2a2a2a" />
</g>
<text x="626" y="18" font-size="9.5" fill="#c8c8c8" class="uib" text-anchor="middle">Br</text>
<text x="662" y="18" font-size="9.5" fill="#c8c8c8" class="uib" text-anchor="middle">St</text>
<text x="703.7" y="19.6" font-size="13" fill="#e6e6e6" class="ui" textLength="25.8" lengthAdjust="spacingAndGlyphs" >75%</text>
<path d="M737.5 12.6 h7.4 l-3.7 5.2 z" fill="#d6d6d6"/>
<g class="cr">
<rect x="775" y="7" width="18" height="15" fill="#cfcfcf" />
<rect x="780" y="11" width="12" height="10" fill="#4a4a4a" />
<rect x="781" y="12" width="11" height="8" fill="#6a6a6a" />
<rect x="783" y="8" width="1" height="2" fill="#333" />
<rect x="786" y="8" width="1" height="2" fill="#333" />
<rect x="789" y="8" width="1" height="2" fill="#333" />
<rect x="792" y="8" width="1" height="2" fill="#333" />
<rect x="776" y="13" width="2" height="1" fill="#333" />
<rect x="776" y="16" width="2" height="1" fill="#333" />
<rect x="776" y="19" width="2" height="1" fill="#333" />
<rect x="775" y="7" width="4" height="3" fill="#bdbdbd" />
<rect x="823" y="7" width="18" height="15" fill="#cfcfcf" />
<rect x="824" y="8" width="16" height="13" fill="#484848" />
<rect x="827" y="7" width="10" height="1" fill="#484848" />
<rect x="827" y="21" width="10" height="1" fill="#484848" />
<rect x="823" y="10" width="1" height="9" fill="#484848" />
<rect x="840" y="10" width="1" height="9" fill="#484848" />
<rect x="825" y="9" width="14" height="11" fill="#e0e0e0" />
<rect x="826" y="10" width="12" height="9" fill="#1e1e1e" />
<rect x="827" y="11" width="10" height="7" fill="#bdbdbd" />
<rect x="871" y="7" width="18" height="15" fill="#d0d0d0" />
<rect x="872" y="8" width="16" height="13" fill="#1e1e1e" />
<rect x="873" y="9" width="7" height="11" fill="#c4c4c4" />
<rect x="881" y="9" width="6" height="5" fill="#c4c4c4" />
<rect x="881" y="15" width="6" height="5" fill="#c4c4c4" />
</g>
<path d="M795.3 12.6 h6.8 l-3.4 5.3 z" fill="#d6d6d6"/>
<path d="M843 12.6 h6.8 l-3.4 5.3 z" fill="#d6d6d6"/>
<path d="M891 12.6 h6.8 l-3.4 5.3 z" fill="#d6d6d6"/>
</g>
<g id="control">
<g class="cr">
<rect x="5" y="51" width="4" height="1" fill="#222" />
<rect x="5" y="53" width="4" height="1" fill="#222" />
<rect x="5" y="55" width="4" height="1" fill="#222" />
<rect x="5" y="57" width="4" height="1" fill="#222" />
<rect x="5" y="59" width="4" height="1" fill="#222" />
<rect x="5" y="61" width="4" height="1" fill="#222" />
<rect x="5" y="63" width="4" height="1" fill="#222" />
<rect x="5" y="65" width="4" height="1" fill="#222" />
<rect x="5" y="67" width="4" height="1" fill="#222" />
<rect x="5" y="69" width="4" height="1" fill="#222" />
</g>
<g class="cr" fill="none" stroke="#c4c4c4" stroke-width="1">
<rect x="27.5" y="51.5" width="4" height="4"/>
<rect x="34.0" y="51.0" width="5" height="5" fill="#d8d8d8" stroke="none"/>
<rect x="41.5" y="51.5" width="4" height="4"/>
<rect x="27.5" y="58.5" width="4" height="4"/>
<rect x="34.5" y="58.5" width="4" height="4"/>
<rect x="41.5" y="58.5" width="4" height="4"/>
<rect x="27.5" y="65.5" width="4" height="4"/>
<rect x="34.5" y="65.5" width="4" height="4"/>
<rect x="41.5" y="65.5" width="4" height="4"/>
<path d="M32 53.5h2M39 53.5h2"/>
<path d="M32 60.5h2M39 60.5h2"/>
<path d="M32 67.5h2M39 67.5h2"/>
<path d="M29.5 56v2M29.5 63v2"/>
<path d="M36.5 56v2M36.5 63v2"/>
<path d="M43.5 56v2M43.5 63v2"/>
</g>
<text x="64.6" y="51.5" font-size="10.5" fill="#dcdcdc" class="ui" textLength="9" lengthAdjust="spacingAndGlyphs" >X:</text>
<text x="64.6" y="77.5" font-size="10.5" fill="#dcdcdc" class="ui" textLength="9" lengthAdjust="spacingAndGlyphs" >Y:</text>
<g class="cr">
<rect x="78" y="38" width="17" height="19" fill="#2d2d2d" />
<rect x="79" y="39" width="15" height="8" fill="#565656" />
<rect x="79" y="48" width="15" height="8" fill="#565656" />
</g>
<path d="M83 45 h7 l-3.5 -4 z" fill="#8c8c8c"/>
<path d="M83 50 h7 l-3.5 4 z" fill="#8c8c8c"/>
<g class="cr">
<rect x="97" y="38" width="67" height="19" fill="#2d2d2d" />
<rect x="98" y="39" width="65" height="17" fill="#8a8a8a" />
</g>
<g class="cr">
<rect x="78" y="64" width="17" height="19" fill="#2d2d2d" />
<rect x="79" y="65" width="15" height="8" fill="#565656" />
<rect x="79" y="74" width="15" height="8" fill="#565656" />
</g>
<path d="M83 71 h7 l-3.5 -4 z" fill="#8c8c8c"/>
<path d="M83 76 h7 l-3.5 4 z" fill="#8c8c8c"/>
<g class="cr">
<rect x="97" y="64" width="67" height="19" fill="#2d2d2d" />
<rect x="98" y="65" width="65" height="17" fill="#8a8a8a" />
</g>
<text x="99.7" y="50.8" font-size="10.2" fill="#3a3a3a" class="ui" textLength="29.5" lengthAdjust="spacingAndGlyphs" stroke="#3a3a3a" stroke-width="0.25">392 мм</text>
<text x="100.6" y="76.8" font-size="10.2" fill="#3a3a3a" class="ui" textLength="36.5" lengthAdjust="spacingAndGlyphs" stroke="#3a3a3a" stroke-width="0.25">138,5 мм</text>
<text x="175.7" y="52" font-size="10.5" fill="#dcdcdc" class="ui" textLength="13" lengthAdjust="spacingAndGlyphs" >Ш:</text>
<text x="178.6" y="77.7" font-size="10.5" fill="#dcdcdc" class="ui" textLength="9.4" lengthAdjust="spacingAndGlyphs" >В:</text>
<g class="cr">
<rect x="191" y="38" width="17" height="19" fill="#2d2d2d" />
<rect x="192" y="39" width="15" height="8" fill="#565656" />
<rect x="192" y="48" width="15" height="8" fill="#565656" />
</g>
<path d="M196 45 h7 l-3.5 -4 z" fill="#8c8c8c"/>
<path d="M196 50 h7 l-3.5 4 z" fill="#8c8c8c"/>
<g class="cr">
<rect x="210" y="38" width="67" height="19" fill="#2d2d2d" />
<rect x="211" y="39" width="65" height="17" fill="#8a8a8a" />
</g>
<g class="cr">
<rect x="191" y="64" width="17" height="19" fill="#2d2d2d" />
<rect x="192" y="65" width="15" height="8" fill="#565656" />
<rect x="192" y="74" width="15" height="8" fill="#565656" />
</g>
<path d="M196 71 h7 l-3.5 -4 z" fill="#8c8c8c"/>
<path d="M196 76 h7 l-3.5 4 z" fill="#8c8c8c"/>
<g class="cr">
<rect x="210" y="64" width="67" height="19" fill="#2d2d2d" />
<rect x="211" y="65" width="65" height="17" fill="#8a8a8a" />
</g>
<g fill="none" stroke="#d2d2d2">
<path d="M292.5 57.5v-2a2.5 2.5 0 0 1 5 0v2M292.5 60.5v2a2.5 2.5 0 0 0 5 0v-2" stroke-width="1.6"/>
<path d="M288 59h2.5M299.5 59h2.5M288.5 55.5l2 1M288.5 62.5l2-1M301.5 55.5l-2 1M301.5 62.5l-2-1" stroke-width="1"/>
</g>
<g class="cr">
<rect x="312" y="37" width="1" height="47" fill="#363636" />
<rect x="313" y="37" width="1" height="47" fill="#525252" />
</g>
<g class="cr">
<rect x="320" y="40" width="14" height="1" fill="#d6d6d6" />
<rect x="320" y="40" width="1" height="15" fill="#d6d6d6" />
<rect x="320" y="54" width="1" height="1" fill="#d6d6d6" />
<rect x="322" y="54" width="1" height="1" fill="#d6d6d6" />
<rect x="324" y="54" width="1" height="1" fill="#d6d6d6" />
<rect x="326" y="54" width="1" height="1" fill="#d6d6d6" />
<rect x="328" y="54" width="1" height="1" fill="#d6d6d6" />
<rect x="330" y="54" width="1" height="1" fill="#d6d6d6" />
<rect x="332" y="54" width="1" height="1" fill="#d6d6d6" />
<rect x="333" y="40" width="1" height="1" fill="#d6d6d6" />
<rect x="333" y="42" width="1" height="1" fill="#d6d6d6" />
<rect x="333" y="44" width="1" height="1" fill="#d6d6d6" />
<rect x="333" y="46" width="1" height="1" fill="#d6d6d6" />
<rect x="333" y="48" width="1" height="1" fill="#d6d6d6" />
<rect x="333" y="50" width="1" height="1" fill="#d6d6d6" />
<rect x="333" y="52" width="1" height="1" fill="#d6d6d6" />
<rect x="333" y="54" width="1" height="1" fill="#d6d6d6" />
<rect x="322" y="46" width="7" height="2" fill="#e6e6e6" />
</g>
<path d="M328 43 l4.5 4 l-4.5 4z" fill="#e6e6e6"/>
<g class="cr">
<rect x="320" y="66" width="14" height="1" fill="#d6d6d6" />
<rect x="320" y="66" width="1" height="15" fill="#d6d6d6" />
<rect x="320" y="80" width="1" height="1" fill="#d6d6d6" />
<rect x="322" y="80" width="1" height="1" fill="#d6d6d6" />
<rect x="324" y="80" width="1" height="1" fill="#d6d6d6" />
<rect x="326" y="80" width="1" height="1" fill="#d6d6d6" />
<rect x="328" y="80" width="1" height="1" fill="#d6d6d6" />
<rect x="330" y="80" width="1" height="1" fill="#d6d6d6" />
<rect x="332" y="80" width="1" height="1" fill="#d6d6d6" />
<rect x="333" y="66" width="1" height="1" fill="#d6d6d6" />
<rect x="333" y="68" width="1" height="1" fill="#d6d6d6" />
<rect x="333" y="70" width="1" height="1" fill="#d6d6d6" />
<rect x="333" y="72" width="1" height="1" fill="#d6d6d6" />
<rect x="333" y="74" width="1" height="1" fill="#d6d6d6" />
<rect x="333" y="76" width="1" height="1" fill="#d6d6d6" />
<rect x="333" y="78" width="1" height="1" fill="#d6d6d6" />
<rect x="333" y="80" width="1" height="1" fill="#d6d6d6" />
<rect x="326" y="68" width="2" height="8" fill="#e6e6e6" />
</g>
<path d="M323 74.5 h8 l-4 4.5z" fill="#e6e6e6"/>
<g class="cr">
<rect x="339" y="38" width="17" height="19" fill="#2d2d2d" />
<rect x="340" y="39" width="15" height="8" fill="#565656" />
<rect x="340" y="48" width="15" height="8" fill="#565656" />
</g>
<path d="M344 45 h7 l-3.5 -4 z" fill="#8c8c8c"/>
<path d="M344 50 h7 l-3.5 4 z" fill="#8c8c8c"/>
<g class="cr">
<rect x="358" y="38" width="67" height="19" fill="#2d2d2d" />
<rect x="359" y="39" width="47" height="17" fill="#8a8a8a" />
<rect x="406" y="39" width="18" height="17" fill="#5a5a5a" />
<rect x="406" y="39" width="1" height="17" fill="#6e6e6e" />
</g>
<path d="M412.4 45 h7.2 l-3.6 5.2 z" fill="#909090"/>
<g class="cr">
<rect x="339" y="64" width="17" height="19" fill="#2d2d2d" />
<rect x="340" y="65" width="15" height="8" fill="#565656" />
<rect x="340" y="74" width="15" height="8" fill="#565656" />
</g>
<path d="M344 71 h7 l-3.5 -4 z" fill="#8c8c8c"/>
<path d="M344 76 h7 l-3.5 4 z" fill="#8c8c8c"/>
<g class="cr">
<rect x="358" y="64" width="67" height="19" fill="#2d2d2d" />
<rect x="359" y="65" width="47" height="17" fill="#8a8a8a" />
<rect x="406" y="65" width="18" height="17" fill="#5a5a5a" />
<rect x="406" y="65" width="1" height="17" fill="#6e6e6e" />
</g>
<path d="M412.4 71 h7.2 l-3.6 5.2 z" fill="#909090"/>
<g class="cr">
<rect x="432" y="49" width="22" height="22" fill="#3d3d3d" />
<rect x="433" y="50" width="20" height="20" fill="#2c2c2c" />
</g>
<g fill="none" stroke="#e0e0e0" stroke-width="1.7"><rect x="440.3" y="53.5" width="5.4" height="8" rx="2.7"/><rect x="440.3" y="58.5" width="5.4" height="8" rx="2.7"/></g>
<path d="M463 52.5h12M463.5 52.5l9.5-8" fill="none" stroke="#d0d0d0" stroke-width="1.2"/><path d="M469 47.5a6 6 0 0 1 3 5" fill="none" stroke="#d0d0d0" stroke-width="1"/>
<path d="M467.5 68.5h7.5l-4 10h-7.5z" fill="#6c6c6c" stroke="#d0d0d0" stroke-width="1.1"/>
<g class="cr">
<rect x="481" y="38" width="17" height="19" fill="#2d2d2d" />
<rect x="482" y="39" width="15" height="8" fill="#565656" />
<rect x="482" y="48" width="15" height="8" fill="#565656" />
</g>
<path d="M486 45 h7 l-3.5 -4 z" fill="#8c8c8c"/>
<path d="M486 50 h7 l-3.5 4 z" fill="#8c8c8c"/>
<g class="cr">
<rect x="500" y="38" width="67" height="19" fill="#2d2d2d" />
<rect x="501" y="39" width="47" height="17" fill="#8a8a8a" />
<rect x="548" y="39" width="18" height="17" fill="#5a5a5a" />
<rect x="548" y="39" width="1" height="17" fill="#6e6e6e" />
</g>
<path d="M554.4 45 h7.2 l-3.6 5.2 z" fill="#909090"/>
<g class="cr">
<rect x="481" y="64" width="17" height="19" fill="#2d2d2d" />
<rect x="482" y="65" width="15" height="8" fill="#565656" />
<rect x="482" y="74" width="15" height="8" fill="#565656" />
</g>
<path d="M486 71 h7 l-3.5 -4 z" fill="#8c8c8c"/>
<path d="M486 76 h7 l-3.5 4 z" fill="#8c8c8c"/>
<g class="cr">
<rect x="500" y="64" width="67" height="19" fill="#2d2d2d" />
<rect x="501" y="65" width="47" height="17" fill="#8a8a8a" />
<rect x="548" y="65" width="18" height="17" fill="#5a5a5a" />
<rect x="548" y="65" width="1" height="17" fill="#6e6e6e" />
</g>
<path d="M554.4 71 h7.2 l-3.6 5.2 z" fill="#909090"/>
<g class="cr">
<rect x="573" y="37" width="1" height="47" fill="#363636" />
<rect x="574" y="37" width="1" height="47" fill="#525252" />
</g>
</g>
<g id="control2">
<g fill="none" stroke="#8a8a8a" stroke-width="1.2">
<path d="M584.3 47.500a6.500 6.500 0 0 1 10.500-5.900"/>
<path d="M584.5 49a6.500 6.500 0 0 0 12.700-3.200" stroke-dasharray="2 1.500"/>
<path d="M624.500 47.500a6.500 6.500 0 0 0 -10.500-5.900"/>
<path d="M624.300 49a6.500 6.500 0 0 1 -12.700-3.200" stroke-dasharray="2 1.500"/>
</g>
<path d="M593 39.200l5 4.300l-5.800-0.500z" fill="#8a8a8a"/><path d="M615.800 39.200l-5 4.300l5.800-0.500z" fill="#8a8a8a"/>
<path d="M583.500 71.500v8l4.500-4z" fill="none" stroke="#8a8a8a" stroke-width="1"/><path d="M598.200 70.800v9.400l-5-4.700z" fill="#8a8a8a"/>
<g class="cr" fill="#8a8a8a">
<rect x="590" y="70" width="1" height="1" fill="#8a8a8a" />
<rect x="590" y="72" width="1" height="1" fill="#8a8a8a" />
<rect x="590" y="74" width="1" height="1" fill="#8a8a8a" />
<rect x="590" y="76" width="1" height="1" fill="#8a8a8a" />
<rect x="590" y="78" width="1" height="1" fill="#8a8a8a" />
<rect x="590" y="80" width="1" height="1" fill="#8a8a8a" />
<rect x="610" y="73" width="1" height="1" fill="#8a8a8a" />
<rect x="612" y="73" width="1" height="1" fill="#8a8a8a" />
<rect x="614" y="73" width="1" height="1" fill="#8a8a8a" />
<rect x="616" y="73" width="1" height="1" fill="#8a8a8a" />
<rect x="618" y="73" width="1" height="1" fill="#8a8a8a" />
<rect x="620" y="73" width="1" height="1" fill="#8a8a8a" />
</g>
<path d="M585 70.500a6 6 0 0 1 9-3.500" fill="none" stroke="#8a8a8a" stroke-width="1.200"/><path d="M592.500 64.800l5 4.700l-6 0.300z" fill="#8a8a8a"/>
<path d="M611.500 67.500h8.500l-4.200 4.300z" fill="none" stroke="#8a8a8a" stroke-width="1"/><path d="M610.800 81.200h9.600l-4.800-5.200z" fill="#8a8a8a"/>
<path d="M622 68.500a7 7 0 0 1 2.500 7.500" fill="none" stroke="#8a8a8a" stroke-width="1.200"/><path d="M622 75.500l4.500 0.300l-3.500 4.500z" fill="#8a8a8a"/>
<path d="M638.500 52v-3.500h3.500M659.500 48.500h3.500v3.500M638.500 69v3.500h3.500M659.500 72.500h3.500v-3.500" fill="none" stroke="#969696" stroke-width="1" class="cr"/>
<text x="649.8" y="66.8" font-size="22" fill="#8c8c8c" class="se" text-anchor="middle">P</text>
<g class="cr">
<rect x="670" y="37" width="1" height="47" fill="#363636" />
<rect x="671" y="37" width="1" height="47" fill="#525252" />
</g>
<g class="cr" fill="none" stroke="#8c8c8c" stroke-width="1">
<rect x="686.5" y="45.5" width="2" height="3" />
<path d="M687.5 49v1M682.5 52v-1.500h10v1.500M687.5 50v2"/>
<rect x="681.5" y="52.5" width="2" height="2"/>
<rect x="686.5" y="52.5" width="2" height="2"/>
<rect x="691.5" y="52.5" width="2" height="2"/>
</g>
<path d="M683.500 43h8l-4-4.800z" fill="#8c8c8c"/>
<g class="cr" fill="none" stroke="#8c8c8c" stroke-width="1">
<rect x="686.5" y="66.5" width="2" height="3" />
<path d="M687.5 70v1M682.5 73v-1.500h10v1.500M687.5 71v2"/>
<rect x="681.5" y="73.5" width="2" height="2"/>
<rect x="686.5" y="73.5" width="2" height="2"/>
<rect x="691.5" y="73.5" width="2" height="2"/>
</g>
<path d="M683.500 77.800h8l-4 4.500z" fill="#8c8c8c"/>
<g class="cr" fill="none" stroke="#d2d2d2" stroke-width="1">
<rect x="716.5" y="41.5" width="2" height="3" />
<path d="M717.5 45v1M712.5 48v-1.500h10v1.500M717.5 46v2"/>
<rect x="711.5" y="48.5" width="2" height="2"/>
<rect x="716.5" y="48.5" width="2" height="2"/>
<rect x="721.5" y="48.5" width="2" height="2"/>
</g>
<path d="M710 42.200v8.300l-4.300-4.150z" fill="#d2d2d2"/>
<g class="cr" fill="none" stroke="#d2d2d2" stroke-width="1">
<rect x="711.5" y="68.5" width="2" height="3" />
<path d="M712.5 72v1M707.5 75v-1.500h10v1.500M712.5 73v2"/>
<rect x="706.5" y="75.5" width="2" height="2"/>
<rect x="711.5" y="75.5" width="2" height="2"/>
<rect x="716.5" y="75.5" width="2" height="2"/>
</g>
<path d="M720 69v8.600l4.300-4.300z" fill="#d2d2d2"/>
<g class="cr">
<rect x="732" y="37" width="1" height="47" fill="#363636" />
<rect x="733" y="37" width="1" height="47" fill="#525252" />
</g>
<g class="cr">
<rect x="738" y="37" width="21" height="21" fill="#5a5a5a" />
<rect x="739" y="38" width="19" height="19" fill="#9a9a9a" />
<rect x="740" y="39" width="17" height="17" fill="#fff" />
<rect x="738" y="63" width="21" height="21" fill="#5a5a5a" />
<rect x="739" y="64" width="19" height="19" fill="#9a9a9a" />
<rect x="740" y="65" width="17" height="17" fill="#fff" />
<rect x="744" y="69" width="10" height="9" fill="#6a6a6a" />
<rect x="745" y="70" width="8" height="7" fill="#3e3e3e" />
</g>
<path d="M740.300 55.700L756.800 39.300" stroke="#f00" stroke-width="2.2" fill="none"/>
<path d="M741.300 80.300L756.200 66.300" stroke="#f00" stroke-width="2.2" fill="none"/>
<g class="cr">
<rect x="763" y="38" width="15" height="19" fill="#2d2d2d" />
<rect x="764" y="39" width="13" height="17" fill="#585858" />
</g>
<path d="M768 43.5 v8 l5.5 -4.0 z" fill="#dcdcdc"/>
<g class="cr">
<rect x="763" y="64" width="15" height="19" fill="#2d2d2d" />
<rect x="764" y="65" width="13" height="17" fill="#585858" />
</g>
<path d="M768 69.5 v8 l5.5 -4.0 z" fill="#dcdcdc"/>
<g class="cr">
<rect x="784" y="37" width="1" height="47" fill="#363636" />
<rect x="785" y="37" width="1" height="47" fill="#525252" />
</g>
<g class="cr">
<rect x="790" y="38" width="17" height="19" fill="#2d2d2d" />
<rect x="791" y="39" width="15" height="8" fill="#565656" />
<rect x="791" y="48" width="15" height="8" fill="#565656" />
</g>
<path d="M795 45 h7 l-3.5 -4 z" fill="#e0e0e0"/>
<path d="M795 50 h7 l-3.5 4 z" fill="#e0e0e0"/>
<g class="cr">
<rect x="809" y="38" width="67" height="19" fill="#2d2d2d" />
<rect x="810" y="39" width="47" height="17" fill="#a3a3a3" />
<rect x="857" y="39" width="18" height="17" fill="#5a5a5a" />
<rect x="857" y="39" width="1" height="17" fill="#6e6e6e" />
</g>
<path d="M863.4 45 h7.2 l-3.6 5.2 z" fill="#e6e6e6"/>
<text x="812.7" y="51" font-size="10.5" fill="#000" class="ui" textLength="19" lengthAdjust="spacingAndGlyphs" stroke="#000" stroke-width="0.3">0 пт</text>
<g class="cr">
<rect x="791" y="64" width="85" height="19" fill="#2d2d2d" />
<rect x="792" y="65" width="65" height="17" fill="#a3a3a3" />
<rect x="857" y="65" width="18" height="17" fill="#5a5a5a" />
<rect x="857" y="65" width="1" height="17" fill="#6e6e6e" />
</g>
<path d="M863.4 71 h7.2 l-3.6 5.2 z" fill="#e6e6e6"/>
<g class="cr">
<rect x="796" y="70" width="60" height="8" fill="#000" />
</g>
<g class="cr">
<rect x="882" y="37" width="1" height="47" fill="#363636" />
<rect x="883" y="37" width="1" height="47" fill="#525252" />
</g>
<g class="cr">
<rect x="894" y="40" width="11" height="1" fill="#2e2e2e" />
<rect x="894" y="41" width="11" height="11" fill="#d2d2d2" />
<rect x="895" y="42" width="9" height="9" fill="#484848" />
</g>
<g class="cr">
<rect x="896" y="42" width="3" height="1" fill="#101010" />
<rect x="896" y="50" width="3" height="1" fill="#101010" />
<rect x="900" y="42" width="3" height="1" fill="#101010" />
<rect x="900" y="50" width="3" height="1" fill="#101010" />
<rect x="895" y="43" width="1" height="3" fill="#101010" />
<rect x="903" y="43" width="1" height="3" fill="#101010" />
<rect x="895" y="47" width="1" height="3" fill="#101010" />
<rect x="903" y="47" width="1" height="3" fill="#101010" />
</g>
<path d="M906 51 h3.4 l-1.7 2.2 z" fill="#d2d2d2"/>
<defs><linearGradient id="gsq" x1="0" y1="0" x2="0" y2="1"><stop offset="0" stop-color="#7c7c7c"/><stop offset="1" stop-color="#5a5a5a"/></linearGradient><linearGradient id="gsh" x1="0" y1="0" x2="1" y2="1"><stop offset="0" stop-color="#8a8a8a"/><stop offset="1" stop-color="#555"/></linearGradient></defs>
<g class="cr">
<rect x="923" y="40" width="11" height="1" fill="#2e2e2e" />
<rect x="925" y="43" width="12" height="12" fill="url(#gsh)" />
<rect x="923" y="41" width="11" height="11" fill="#d0d0d0" />
<rect x="924" y="42" width="9" height="9" fill="url(#gsq)" />
</g>
<text x="951.5" y="51.6" font-size="15.5" fill="#d2d2d2" class="ui" font-style="italic" textLength="12" lengthAdjust="spacingAndGlyphs">fx</text>
<path d="M964.4 51 h3.4 l-1.7 2.2 z" fill="#d2d2d2"/>
<g class="cr">
<rect x="891" y="67" width="11" height="1" fill="#2e2e2e" />
<rect x="891" y="68" width="11" height="11" fill="#dcdcdc" />
<rect x="892" y="69" width="3" height="3" fill="#888" />
<rect x="895" y="69" width="3" height="3" fill="#c6c6c6" />
<rect x="898" y="69" width="3" height="3" fill="#888" />
<rect x="892" y="72" width="3" height="3" fill="#c6c6c6" />
<rect x="895" y="72" width="3" height="3" fill="#888" />
<rect x="898" y="72" width="3" height="3" fill="#c6c6c6" />
<rect x="892" y="75" width="3" height="3" fill="#888" />
<rect x="895" y="75" width="3" height="3" fill="#c6c6c6" />
<rect x="898" y="75" width="3" height="3" fill="#888" />
</g>
<g class="cr">
<rect x="910" y="64" width="67" height="19" fill="#2d2d2d" />
<rect x="911" y="65" width="48" height="17" fill="#a3a3a3" />
<rect x="959" y="65" width="17" height="17" fill="#5a5a5a" />
<rect x="959" y="65" width="1" height="17" fill="#6e6e6e" />
</g>
<path d="M966.0 69.5 v8 l5.5 -4.0 z" fill="#e6e6e6"/>
<text x="914.6" y="77" font-size="10.5" fill="#000" class="ui" textLength="23.6" lengthAdjust="spacingAndGlyphs" stroke="#000" stroke-width="0.3">100%</text>
<g class="cr">
<rect x="984" y="37" width="1" height="47" fill="#363636" />
<rect x="985" y="37" width="1" height="47" fill="#525252" />
</g>
<g class="cr">
<rect x="991" y="36" width="22" height="22" fill="#3c3c3c" />
<rect x="992" y="37" width="20" height="20" fill="#2a2a2a" />
<rect x="995" y="40" width="14" height="1" fill="#ececec" />
<rect x="995" y="42" width="14" height="1" fill="#ececec" />
<rect x="995" y="44" width="14" height="1" fill="#ececec" />
<rect x="995" y="46" width="14" height="1" fill="#ececec" />
<rect x="995" y="48" width="14" height="1" fill="#ececec" />
<rect x="995" y="50" width="14" height="1" fill="#ececec" />
<rect x="995" y="52" width="14" height="1" fill="#ececec" />
<rect x="999" y="42" width="6" height="9" fill="#2a2a2a" />
<rect x="999" y="42" width="6" height="1" fill="#a0a0a0" />
<rect x="999" y="44" width="6" height="1" fill="#a0a0a0" />
<rect x="999" y="46" width="6" height="1" fill="#a0a0a0" />
<rect x="999" y="48" width="6" height="1" fill="#a0a0a0" />
<rect x="999" y="50" width="6" height="1" fill="#a0a0a0" />
<rect x="998" y="42" width="1" height="9" fill="#ececec" />
<rect x="1005" y="42" width="1" height="9" fill="#ececec" />
<rect x="1022" y="40" width="14" height="1" fill="#e0e0e0" />
<rect x="1022" y="42" width="14" height="1" fill="#e0e0e0" />
<rect x="1022" y="44" width="14" height="1" fill="#e0e0e0" />
<rect x="1022" y="46" width="14" height="1" fill="#e0e0e0" />
<rect x="1022" y="48" width="14" height="1" fill="#e0e0e0" />
<rect x="1022" y="50" width="14" height="1" fill="#e0e0e0" />
<rect x="1022" y="52" width="14" height="1" fill="#e0e0e0" />
<rect x="1025" y="42" width="8" height="9" fill="#474747" />
<rect x="1026" y="43" width="6" height="7" fill="#dcdcdc" />
<rect x="1027" y="44" width="4" height="5" fill="#6e6e6e" />
<rect x="995" y="67" width="14" height="1" fill="#e0e0e0" />
<rect x="995" y="69" width="14" height="1" fill="#e0e0e0" />
<rect x="995" y="71" width="14" height="1" fill="#e0e0e0" />
<rect x="995" y="73" width="14" height="1" fill="#e0e0e0" />
<rect x="995" y="75" width="14" height="1" fill="#e0e0e0" />
<rect x="995" y="77" width="14" height="1" fill="#e0e0e0" />
<rect x="995" y="79" width="14" height="1" fill="#e0e0e0" />
</g>
<ellipse cx="1002" cy="73.500" rx="5.300" ry="5.800" fill="#474747"/><ellipse cx="1002" cy="73.500" rx="4.200" ry="4.800" fill="#cacaca"/>
<g class="cr">
<rect x="1022" y="67" width="14" height="1" fill="#e0e0e0" />
<rect x="1022" y="69" width="14" height="1" fill="#e0e0e0" />
<rect x="1022" y="77" width="14" height="1" fill="#e0e0e0" />
<rect x="1022" y="79" width="14" height="1" fill="#e0e0e0" />
<rect x="1026" y="71" width="6" height="5" fill="#cacaca" />
</g>
<g class="cr">
<rect x="1046" y="37" width="1" height="47" fill="#363636" />
<rect x="1047" y="37" width="1" height="47" fill="#525252" />
</g>
<g class="cr">
<rect x="1056" y="43" width="10" height="10" fill="#e0e0e0" />
<rect x="1057" y="44" width="8" height="8" fill="#6a6a6a" />
<rect x="1054" y="41" width="3" height="3" fill="#1fa8ff" />
<rect x="1065" y="41" width="3" height="3" fill="#1fa8ff" />
<rect x="1054" y="52" width="3" height="3" fill="#1fa8ff" />
<rect x="1065" y="52" width="3" height="3" fill="#1fa8ff" />
</g>
<g class="cr">
<rect x="1073" y="38" width="17" height="19" fill="#2d2d2d" />
<rect x="1074" y="39" width="15" height="8" fill="#565656" />
<rect x="1074" y="48" width="15" height="8" fill="#565656" />
</g>
<path d="M1078 45 h7 l-3.5 -4 z" fill="#e0e0e0"/>
<path d="M1078 50 h7 l-3.5 4 z" fill="#e0e0e0"/>
<g class="cr">
<rect x="1092" y="38" width="67" height="19" fill="#2d2d2d" />
<rect x="1093" y="39" width="65" height="17" fill="#a3a3a3" />
</g>
<text x="1094.6" y="51" font-size="10.5" fill="#000" class="ui" textLength="37.6" lengthAdjust="spacingAndGlyphs" stroke="#000" stroke-width="0.3">4,233 мм</text>
<g class="cr">
<rect x="1074" y="64" width="85" height="19" fill="#2d2d2d" />
<rect x="1075" y="65" width="65" height="17" fill="#a3a3a3" />
<rect x="1140" y="65" width="18" height="17" fill="#5a5a5a" />
<rect x="1140" y="65" width="1" height="17" fill="#6e6e6e" />
</g>
<path d="M1146.4 71 h7.2 l-3.6 5.2 z" fill="#e6e6e6"/>
<path d="M1077 68.500h59.5v11.5" fill="none" stroke="#444" stroke-width="1.6" class="cr"/>
<g class="cr">
<rect x="1165" y="37" width="1" height="47" fill="#363636" />
<rect x="1166" y="37" width="1" height="47" fill="#525252" />
</g>
<g class="cr" fill="#474747" stroke="#cfcfcf" stroke-width="1">
<rect x="1180.5" y="41.5" width="2" height="2"/>
<rect x="1184.5" y="41.5" width="2" height="2"/>
<rect x="1188.5" y="41.5" width="2" height="2"/>
<rect x="1180.5" y="45.5" width="2" height="2"/>
<rect x="1188.5" y="45.5" width="2" height="2"/>
<rect x="1180.5" y="49.5" width="2" height="2"/>
<rect x="1184.5" y="49.5" width="2" height="2"/>
<rect x="1188.5" y="49.5" width="2" height="2"/>
</g>
<path d="M1192 51 h3.4 l-1.7 2.2 z" fill="#d2d2d2"/>
<g class="cr">
<rect x="1207" y="38" width="180" height="19" fill="#2d2d2d" />
<rect x="1208" y="39" width="160" height="17" fill="#a3a3a3" />
<rect x="1368" y="39" width="18" height="17" fill="#5a5a5a" />
<rect x="1368" y="39" width="1" height="17" fill="#6e6e6e" />
</g>
<path d="M1374.4 45 h7.2 l-3.6 5.2 z" fill="#e6e6e6"/>
<text x="1213.4" y="51" font-size="10.5" fill="#000" class="ui" textLength="111.6" lengthAdjust="spacingAndGlyphs" stroke="#000" stroke-width="0.3">[Графический фрейм]+</text>
<g class="cr">
<rect x="1393" y="37" width="1" height="47" fill="#363636" />
<rect x="1394" y="37" width="1" height="47" fill="#525252" />
</g>
<g class="cr">
<rect x="1336" y="69" width="8" height="8" fill="#8a8a8a" />
<rect x="1337" y="70" width="6" height="6" fill="#6a6a6a" />
<rect x="1340" y="72" width="8" height="8" fill="#8a8a8a" />
<rect x="1341" y="73" width="6" height="6" fill="#3a3a3a" />
<rect x="1367" y="69" width="10" height="10" fill="#e0e0e0" />
</g>
<path d="M1357 77.5h-5M1352 72.500h3.500a2.500 2.500 0 0 1 0 5" fill="none" stroke="#8a8a8a" stroke-width="1.1"/><path d="M1353.5 70l-3 2.500l3 2.500z" fill="#8a8a8a"/>
<rect x="1369" y="71" width="6" height="6" fill="none" stroke="#2a2a2a" stroke-width="1.6" stroke-dasharray="2.2 1.6"/>
<path d="M1379 77l6-6M1380 71.500l3.500 3.500M1383 70v4" fill="none" stroke="#d0d0d0" stroke-width="1"/>
</g>
<g id="tab">
<text x="12.85" y="109.2" font-size="11.5" fill="#dedede" class="uib" textLength="149.1" lengthAdjust="spacingAndGlyphs" >Безымянный-2.indd @ 75%</text>
<path d="M171.3 102.3l5.400 5.400M176.700 102.300l-5.400 5.400" stroke="#c4c4c4" stroke-width="2" fill="none"/>
</g>
<g id="toolbox">
<defs><linearGradient id="gi" x1="0" y1="0" x2="0" y2="1"><stop offset="0" stop-color="#e6e6e6"/><stop offset="1" stop-color="#a8a8a8"/></linearGradient><linearGradient id="gh" x1="0" y1="0" x2="1" y2="0"><stop offset="0" stop-color="#2e2e2e"/><stop offset="1" stop-color="#c8c8c8"/></linearGradient><linearGradient id="ge" x1="0" y1="0" x2="0" y2="1"><stop offset="0" stop-color="#9a9a9a"/><stop offset="1" stop-color="#5e5e5e"/></linearGradient></defs>
<path d="M0 705V98.500a2.500 2.500 0 0 1 2.500-2.500h35a2.500 2.500 0 0 1 2.500 2.500V705z" fill="#222"/>
<g class="cr">
<rect x="1" y="97" width="38" height="13" fill="#333333" />
<rect x="1" y="110" width="38" height="595" fill="#484848" />
<rect x="1" y="110" width="38" height="1" fill="#5a5a5a" />
<rect x="0" y="705" width="40" height="1" fill="#262626" />
<rect x="39" y="110" width="1" height="595" fill="#2c2c2c" />
<rect x="10" y="113" width="1" height="4" fill="#181818" />
<rect x="12" y="113" width="1" height="4" fill="#181818" />
<rect x="14" y="113" width="1" height="4" fill="#181818" />
<rect x="16" y="113" width="1" height="4" fill="#181818" />
<rect x="18" y="113" width="1" height="4" fill="#181818" />
<rect x="20" y="113" width="1" height="4" fill="#181818" />
<rect x="22" y="113" width="1" height="4" fill="#181818" />
<rect x="24" y="113" width="1" height="4" fill="#181818" />
<rect x="26" y="113" width="1" height="4" fill="#181818" />
<rect x="28" y="113" width="1" height="4" fill="#181818" />
<rect x="10" y="117" width="1" height="1" fill="#686868" />
<rect x="12" y="117" width="1" height="1" fill="#686868" />
<rect x="14" y="117" width="1" height="1" fill="#686868" />
<rect x="16" y="117" width="1" height="1" fill="#686868" />
<rect x="18" y="117" width="1" height="1" fill="#686868" />
<rect x="20" y="117" width="1" height="1" fill="#686868" />
<rect x="22" y="117" width="1" height="1" fill="#686868" />
<rect x="24" y="117" width="1" height="1" fill="#686868" />
<rect x="26" y="117" width="1" height="1" fill="#686868" />
<rect x="28" y="117" width="1" height="1" fill="#686868" />
<rect x="2" y="245" width="36" height="1" fill="#363636" />
<rect x="2" y="246" width="36" height="1" fill="#525252" />
<rect x="2" y="392" width="36" height="1" fill="#363636" />
<rect x="2" y="393" width="36" height="1" fill="#525252" />
<rect x="2" y="491" width="36" height="1" fill="#363636" />
<rect x="2" y="492" width="36" height="1" fill="#525252" />
<rect x="2" y="590" width="36" height="1" fill="#363636" />
<rect x="2" y="591" width="36" height="1" fill="#525252" />
<rect x="6" y="125" width="28" height="22" fill="#3e3e3e" />
<rect x="7" y="126" width="26" height="20" fill="#333333" />
</g>
<path d="M10.500 101.500l2.500 2.300l-2.500 2.300M14.500 101.500l2.500 2.300l-2.500 2.300" fill="none" stroke="#a4a4a4" stroke-width="1.2"/>
<path d="M28.600 101.200l5.400 5.600M34 101.200l-5.400 5.600" fill="none" stroke="#d0d0d0" stroke-width="2"/>
<path d="M15.400 128.800v12l2.900-2.500l2.100 4.800l2.300-1l-2.100-4.700l3.900-0.300z" fill="#1c1c1c" stroke="#dcdcdc" stroke-width="1" stroke-linejoin="miter"/>
<path d="M16.300 152v13.500l3.200-2.800l2.400 5.300l2.700-1.200l-2.400-5.200l4.300-0.300z" fill="url(#gi)"/>
<path d="M14 176.500h7.500v5.500h4.300v3.500l-3 -1.500v7h-8.800z" fill="url(#gi)"/><path d="M22 176.800l3.800 4.500h-3.800z" fill="#d8d8d8"/><path d="M23.300 185v7.500l2-1.800l3.200-1.400z" fill="#e4e4e4"/>
<g class="cr">
<rect x="10" y="200" width="2" height="15" fill="url(#gi)" />
<rect x="28" y="200" width="2" height="15" fill="url(#gi)" />
<rect x="16" y="207" width="8" height="2" fill="#d4d4d4" />
</g>
<path d="M13 208l4.500-4.500v9zM27 208l-4.500-4.500v9z" fill="#d4d4d4"/>
<g class="cr">
<rect x="13" y="229" width="2" height="11" fill="url(#gi)" />
<rect x="25" y="229" width="2" height="11" fill="url(#gi)" />
<rect x="13" y="238" width="14" height="2" fill="#bcbcbc" />
<rect x="16" y="232" width="2" height="2" fill="#d0d0d0" />
<rect x="22" y="232" width="2" height="2" fill="#d0d0d0" />
<rect x="16" y="235" width="2" height="2" fill="#d0d0d0" />
<rect x="19" y="235" width="2" height="2" fill="#d0d0d0" />
<rect x="22" y="235" width="2" height="2" fill="#d0d0d0" />
<rect x="16" y="235" width="8" height="1" fill="#d0d0d0" />
</g>
<path d="M15.500 224.500l4 4" stroke="#d4d4d4" stroke-width="1.600" fill="none"/><path d="M21.300 226v4.300h-4.300z" fill="#d4d4d4"/>
<path d="M32 238v3h-3z" fill="#e0e0e0"/>
<text x="20" y="265.5" font-size="20" fill="#d4d4d4" class="se" text-anchor="middle">T</text>
<path d="M32 264.5v3h-3z" fill="#e0e0e0"/>
<path d="M13.300 289.700L26 277" stroke="#d4d4d4" stroke-width="1.300" fill="none"/>
<path d="M16.500 313v-13.500l9.500 9.500" stroke="#d4d4d4" stroke-width="1.200" fill="none"/>
<path d="M32 312.5v3h-3z" fill="#e0e0e0"/>
<path d="M24.200 324l2.800 2.800l-9.500 9.500l-2.800-2.800z" fill="#8a8a8a" stroke="#cfcfcf" stroke-width="0.800"/><path d="M24.200 324l1.300-1.200a1.900 1.900 0 0 1 2.700 2.700l-1.200 1.300z" fill="#d8d8d8"/><path d="M14.500 333.700l2.800 2.800l-5.300 2.500z" fill="#d6d6d6"/>
<path d="M32 336.5v3h-3z" fill="#e0e0e0"/>
<g fill="none" stroke="#d4d4d4"><rect x="13.500" y="349.500" width="13" height="11" stroke-width="1.300" fill="#5a5a5a"/><path d="M13.500 349.500l13 11M26.500 349.500l-13 11" stroke-width="1"/></g>
<path d="M32 360.5v3h-3z" fill="#e0e0e0"/>
<ellipse cx="20" cy="378.500" rx="7.800" ry="6" fill="url(#ge)" stroke="#d4d4d4" stroke-width="1.200"/>
<path d="M32 384.5v3h-3z" fill="#e0e0e0"/>
<g fill="none" stroke="#d4d4d4"><path d="M12.500 400.500l11.500 7M12.500 409l11.500-7" stroke-width="1.500"/><circle cx="25.500" cy="401" r="1.900" stroke-width="1.200"/><circle cx="25.500" cy="409" r="2.200" stroke-width="1.200"/></g>
<path d="M12 423v11l8-5.500z" fill="#cfcfcf"/><rect x="17" y="424.500" width="10.500" height="10.500" fill="none" stroke="#d4d4d4" stroke-width="1.400" stroke-dasharray="2 1.500"/>
<path d="M32 435.5v3h-3z" fill="#e0e0e0"/>
<g class="cr">
<rect x="12" y="448" width="16" height="13" fill="#d6d6d6" />
<rect x="13" y="449" width="14" height="11" fill="url(#gh)" />
<rect x="12" y="472" width="16" height="12" fill="#d6d6d6" />
<rect x="13" y="473.0" width="3" height="3.4" fill="#3c3c3c" />
<rect x="16" y="473.0" width="3" height="3.4" fill="#cfcfcf" />
<rect x="19" y="473.0" width="3" height="3.4" fill="#3c3c3c" />
<rect x="22" y="473.0" width="3" height="3.4" fill="#cfcfcf" />
<rect x="24" y="473.0" width="3" height="3.4" fill="#3c3c3c" />
<rect x="13" y="476.3" width="3" height="3.4" fill="#cfcfcf" />
<rect x="16" y="476.3" width="3" height="3.4" fill="#3c3c3c" />
<rect x="19" y="476.3" width="3" height="3.4" fill="#cfcfcf" />
<rect x="22" y="476.3" width="3" height="3.4" fill="#3c3c3c" />
<rect x="24" y="476.3" width="3" height="3.4" fill="#cfcfcf" />
<rect x="13" y="479.6" width="3" height="3.4" fill="#3c3c3c" />
<rect x="16" y="479.6" width="3" height="3.4" fill="#8a8a8a" />
<rect x="19" y="479.6" width="3" height="3.4" fill="#3c3c3c" />
<rect x="22" y="479.6" width="3" height="3.4" fill="#8a8a8a" />
<rect x="24" y="479.6" width="3" height="3.4" fill="#3c3c3c" />
<rect x="13" y="482" width="14" height="1" fill="#707070" />
</g>
<path d="M13 498h14v9l-4.500 5h-9.500z" fill="url(#gi)"/><path d="M27 507.500l-4.500 4.500v-4.500z" fill="#6a6a6a"/><g class="cr"><rect x="16" y="501" width="8" height="1" fill="#3a3a3a"/><rect x="16" y="503" width="8" height="1" fill="#3a3a3a"/><rect x="16" y="505" width="5" height="1" fill="#3a3a3a"/></g>
<path d="M13.500 536.500l1-3l7.500-7.500l2 2l-7.500 7.500z" fill="#484848" stroke="#d4d4d4" stroke-width="1"/><path d="M21.500 525l3.500 3.500" stroke="#d0d0d0" stroke-width="2.400"/><path d="M23.700 526.300l2.500-3.300a1.800 1.800 0 0 1 1.800 1.800z" fill="#dadada" stroke="#dadada" stroke-width="1.500"/>
<path d="M32 534.5v3h-3z" fill="#e0e0e0"/>
<path d="M14.500 553.500c-1.500-2-2.500-3.200-1.500-4s2 0.300 3 1.700v-4.700c0-1.300 1.800-1.300 1.900 0v-1.200c0-1.400 2-1.400 2 0v1c0-1.300 2-1.300 2 0.200v1.200c0.100-1.200 1.900-1.100 1.900 0.300v5c0 3-1 4-1.500 7.500h-6c-0.300-2.500-0.800-4.500-1.800-7z" fill="#dedede"/>
<circle cx="18.500" cy="575" r="5" fill="#7a7a7a" stroke="#bdbdbd" stroke-width="1.400"/><path d="M22.500 579.500l5 5.200" stroke="#c4c4c4" stroke-width="2.400" stroke-linecap="round"/>
<g class="cr">
<rect x="9" y="594" width="14" height="14" fill="#555" />
<rect x="10" y="595" width="12" height="12" fill="#e4e4e4" />
<rect x="11" y="596" width="10" height="10" fill="#fff" />
</g>
<path d="M11 605.500l10-9" stroke="#f00" stroke-width="2"/>
<g class="cr">
<rect x="18" y="602" width="13" height="13" fill="#555" />
<rect x="19" y="603" width="11" height="11" fill="#f0f0f0" />
<rect x="21" y="605" width="7" height="7" fill="#4a4a4a" />
</g>
<path d="M20 613l9.500-9" stroke="#f00" stroke-width="2"/>
<path d="M24.500 596.500h2.500a2 2 0 0 1 2 2v2" fill="none" stroke="#d0d0d0" stroke-width="1"/><path d="M25.500 594.500v4l-2.300-2zM27 600h4l-2 2.300z" fill="#d0d0d0"/>
<g class="cr">
<rect x="12" y="617" width="9" height="9" fill="#d8d8d8" />
<rect x="13" y="618" width="7" height="7" fill="#1e1e1e" />
<rect x="9" y="614" width="9" height="9" fill="#d0d0d0" />
<rect x="10" y="615" width="7" height="7" fill="#f4f4f4" />
</g>
<path d="M10.500 621.500l6-6" stroke="#f00" stroke-width="1.300"/>
<g class="cr">
<rect x="5" y="629" width="14" height="13" fill="#363636" />
<rect x="6" y="630" width="12" height="11" fill="#303030" />
<rect x="8" y="631" width="8" height="8" fill="#cfcfcf" />
<rect x="9" y="632" width="6" height="6" fill="#5c5c5c" />
</g>
<text x="28" y="639.4" font-size="13" fill="#dadada" class="se" text-anchor="middle" font-weight="bold">T</text>
<g class="cr">
<rect x="6" y="648" width="28" height="23" fill="#3c3c3c" />
<rect x="7" y="649" width="26" height="21" fill="#333" />
<rect x="12" y="652" width="16" height="15" fill="#cfcfcf" />
<rect x="13" y="653" width="14" height="13" fill="#fff" />
</g>
<path d="M13.500 665l13-11" stroke="#f00" stroke-width="2.200"/>
<path d="M32 665.5v3h-3z" fill="#e0e0e0"/>
<g class="cr">
<rect x="6" y="677" width="28" height="22" fill="#3c3c3c" />
<rect x="7" y="678" width="26" height="20" fill="#333" />
<rect x="15" y="683" width="11" height="11" fill="#d0d0d0" />
<rect x="16" y="684" width="9" height="9" fill="#3a3a3a" />
<rect x="15" y="683" width="11" height="2" fill="#d0d0d0" />
<rect x="17" y="687" width="4" height="3" fill="#e6e6e6" />
<rect x="20" y="689" width="4" height="3" fill="#e6e6e6" />
</g>
<path d="M32 694.5v3h-3z" fill="#e0e0e0"/>
</g>
</svg></body></html>
